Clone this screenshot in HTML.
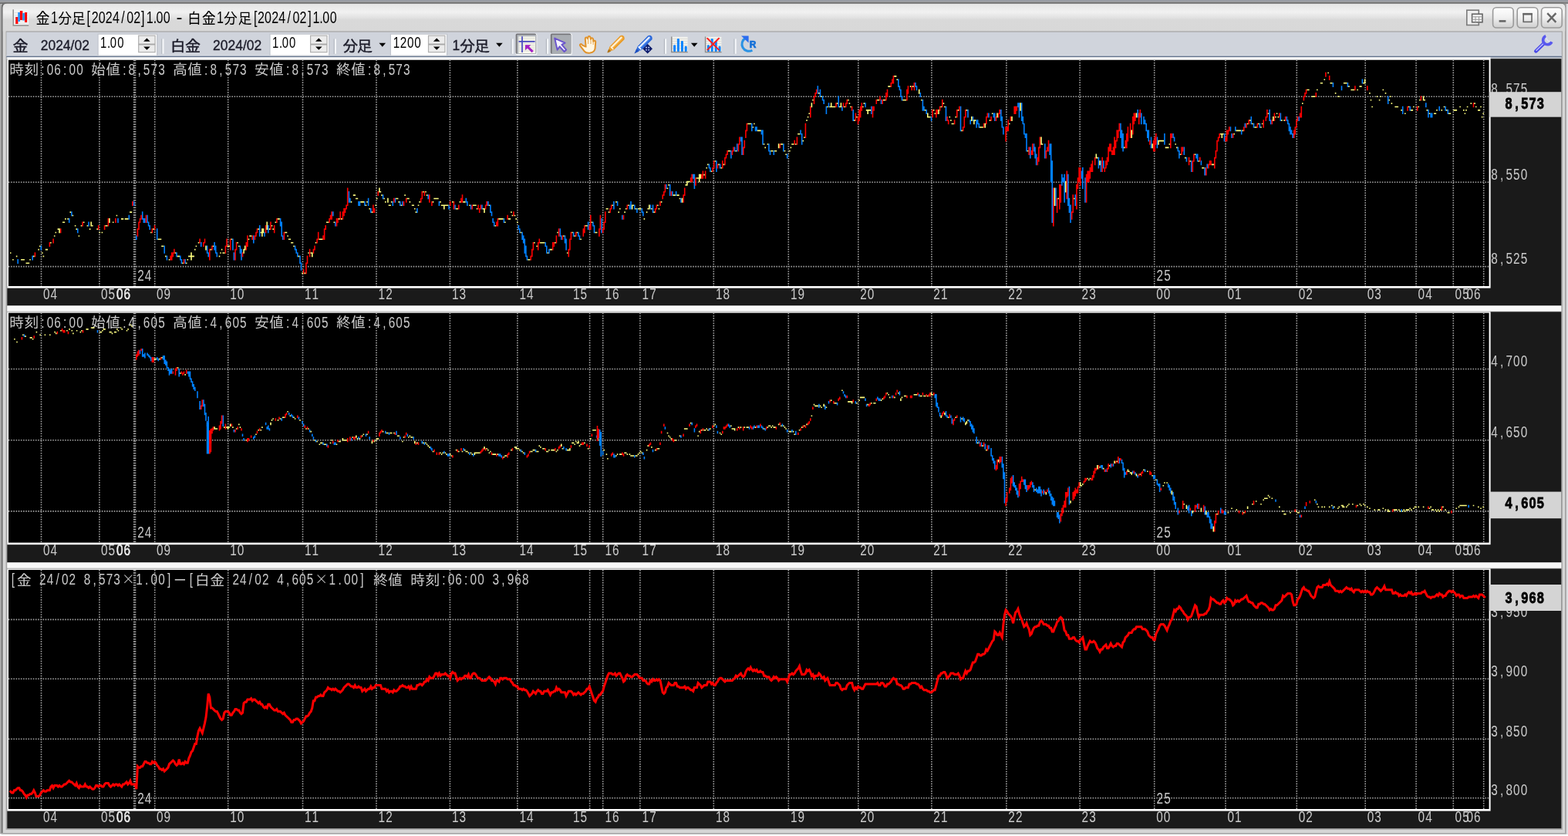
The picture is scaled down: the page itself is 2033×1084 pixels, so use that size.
<!DOCTYPE html>
<html lang="ja"><head><meta charset="utf-8"><title>金1分足[2024/02]1.00 - 白金1分足[2024/02]1.00</title>
<style>
html,body{margin:0;padding:0;background:#fff;overflow:hidden}
body{width:2033px;height:1084px;font-family:"Liberation Sans","IPAGothic",sans-serif}
svg{display:block;position:absolute;left:0;top:0}
text{white-space:pre}
</style></head><body>
<svg width="2033" height="1084" viewBox="0 0 2033 1084">
<defs>
<linearGradient id="gt" x1="0" y1="0" x2="0" y2="1"><stop offset="0" stop-color="#e4e4e4"/><stop offset="0.30" stop-color="#f1f1f1"/><stop offset="0.50" stop-color="#e2e2e2"/><stop offset="0.58" stop-color="#d9d9d9"/><stop offset="1" stop-color="#d8d8d8"/></linearGradient>
<linearGradient id="gtop" x1="0" y1="0" x2="0" y2="1"><stop offset="0" stop-color="#9297a2"/><stop offset="0.45" stop-color="#a2a3a6"/><stop offset="0.75" stop-color="#747474"/><stop offset="1" stop-color="#6e6e6e"/></linearGradient>
<linearGradient id="gbtn" x1="0" y1="0" x2="0" y2="1"><stop offset="0" stop-color="#ffffff"/><stop offset="0.5" stop-color="#f0f0f0"/><stop offset="1" stop-color="#cfcfcf"/></linearGradient>
<filter id="soft" filterUnits="userSpaceOnUse" x="0" y="0" width="2033" height="1084" color-interpolation-filters="sRGB"><feGaussianBlur stdDeviation="0.45"/></filter>
</defs>
<g filter="url(#soft)">
<rect x="0" y="0" width="2033" height="1084" fill="#ffffff"/>
<rect x="0" y="0" width="2033" height="1081.6" fill="#e0e0e4"/>
<rect x="0" y="0" width="1.6" height="1081" fill="#ababab"/>
<rect x="0" y="0" width="2033" height="5" fill="url(#gtop)"/>
<path d="M1.6,1081.3V9 Q1.6,3 7.6,3 H2024.6 Q2030.6,3 2030.6,9 V1081.3 Z" fill="#707070"/>
<path d="M2029.3,1081.3V9 Q2029.3,4.6 2024.6,4.6 H2033 V1081.3Z" fill="#a0a0a0"/>
<rect x="2030.8" y="5" width="2.2" height="1076.6" fill="#dedee2"/>
<path d="M3.6,1080V10 Q3.6,4.8 9,4.8 H2024 Q2029.3,4.8 2029.3,10 V1080 Z" fill="#d6d6d6"/>
<rect x="1.6" y="1080" width="2029" height="1.4" fill="#a8a8a8"/>
<path d="M3.8,40.6V10 Q3.8,5 9,5 H2024 Q2029.2,5 2029.2,10 V40.6 Z" fill="url(#gt)"/>
<rect x="7.6" y="40.4" width="2018.3" height="1035.4" fill="#a4a4a4"/>
<rect x="8.4" y="41.6" width="2016.4" height="31.4" fill="#d0d4dc"/>
<rect x="8.4" y="71.5" width="2016.4" height="1.4" fill="#dde1e8"/>
<rect x="8.4" y="72.6" width="2016.4" height="2.0" fill="#66768f"/>
<rect x="8.4" y="74.3" width="2016.4" height="2" fill="#c4c8d0"/>
<rect x="9.3" y="76.2" width="2015" height="998" fill="#c8c8c8"/>
<rect x="9.3" y="397.0" width="2015" height="6.4" fill="#f9f9f9"/>
<rect x="9.3" y="730.0" width="2015" height="6.4" fill="#f9f9f9"/>
<g><rect x="16.5" y="12.3" width="20.6" height="21.2" fill="#f4f4f4"/><path d="M17.2,12.3V33H37.2" stroke="#8a8a8a" stroke-width="1.4" fill="none"/><path d="M19,16.5H36M19,20H36M19,23.5H36M19,27H36M19,30.3H36" stroke="#dcdcdc" stroke-width="0.8"/><path d="M21.8,22V31" stroke="#ff0000" stroke-width="3.2"/><path d="M24.6,16V28" stroke="#1e90ff" stroke-width="2.6"/><path d="M27.6,14V26" stroke="#ff0000" stroke-width="3.4"/><path d="M30.6,17V26.5" stroke="#1e90ff" stroke-width="2.6"/><path d="M33.6,16V29" stroke="#ff0000" stroke-width="3"/></g>
<text transform="translate(0,30.70) scale(0.900,1)" x="51.47" y="0" font-family='"Liberation Sans", "IPAGothic", sans-serif' font-size="20.4" fill="#000">金</text>
<text transform="translate(0,30.20) scale(0.735,1)" x="89.86" y="0" font-family='"Liberation Sans", "IPAGothic", sans-serif' font-size="21.8" fill="#000">1</text>
<text transform="translate(0,30.70) scale(0.900,1)" x="83.24 103.02" y="0" font-family='"Liberation Sans", "IPAGothic", sans-serif' font-size="20.4" fill="#000">分足</text>
<text transform="translate(0,30.20) scale(0.735,1)" x="153.16 161.42 173.80 186.18 198.57 213.98 223.33 235.71 249.08 258.16 270.30 275.44 288.23" y="0" font-family='"Liberation Sans", "IPAGothic", sans-serif' font-size="21.8" fill="#000">[2024/02]1.00</text>
<text transform="translate(0,29.70) scale(1.100,1)" x="207.73" y="0" font-family='"Liberation Sans", "IPAGothic", sans-serif' font-size="21.8" fill="#000">-</text>
<text transform="translate(0,30.70) scale(0.900,1)" x="269.69 290.58" y="0" font-family='"Liberation Sans", "IPAGothic", sans-serif' font-size="20.4" fill="#000">白金</text>
<text transform="translate(0,30.20) scale(0.735,1)" x="382.37" y="0" font-family='"Liberation Sans", "IPAGothic", sans-serif' font-size="21.8" fill="#000">1</text>
<text transform="translate(0,30.70) scale(0.900,1)" x="322.02 342.80" y="0" font-family='"Liberation Sans", "IPAGothic", sans-serif' font-size="20.4" fill="#000">分足</text>
<text transform="translate(0,30.20) scale(0.735,1)" x="447.58 454.35 466.73 479.11 491.49 506.90 516.25 528.63 543.23 551.76 563.64 569.04 581.97" y="0" font-family='"Liberation Sans", "IPAGothic", sans-serif' font-size="21.8" fill="#000">[2024/02]1.00</text>
<g fill="none" stroke="#7a7a7a" stroke-width="1.6"><rect x="1901.8" y="13.2" width="15.5" height="19.3" fill="#efefef"/><rect x="1908.6" y="18.2" width="13.4" height="10.6" fill="#f6f6f6" stroke="#666"/><path d="M1908.6,21.8H1922M1913,21.8V28.8M1917.5,21.8V28.8M1908.6,25.3H1922" stroke="#9a9a9a" stroke-width="1"/></g>
<rect x="1935.6" y="9.8" width="26.6" height="26.2" rx="4.5" fill="url(#gbtn)" stroke="#9a9a9a" stroke-width="1.6"/>
<rect x="1967.2" y="9.8" width="26.6" height="26.2" rx="4.5" fill="url(#gbtn)" stroke="#9a9a9a" stroke-width="1.6"/>
<rect x="1998.6" y="9.8" width="26.6" height="26.2" rx="4.5" fill="url(#gbtn)" stroke="#9a9a9a" stroke-width="1.6"/>
<path d="M1943.6,27.4H1952.4" stroke="#666" stroke-width="2.6"/>
<rect x="1975.2" y="17.8" width="10.8" height="10.6" fill="none" stroke="#666" stroke-width="1.6"/>
<path d="M1974.4,18.2H1986.8" stroke="#666" stroke-width="2.6"/>
<path d="M2006.2,17.2L2017.4,28.8M2017.4,17.2L2006.2,28.8" stroke="#666" stroke-width="2.4" fill="none"/>
<text transform="translate(0,66.50) scale(1.000,1)" x="16.20" y="0" font-family='"Liberation Sans", "IPAGothic", sans-serif' font-size="20.6" fill="#1c1c2a" stroke="#1c1c2a" stroke-width="0.35">金</text>
<text transform="translate(52.70,65.20) scale(0.940,1)" font-family='"Liberation Sans", "IPAGothic", sans-serif' font-size="18.6" fill="#1c1c2a" stroke="#1c1c2a" stroke-width="0.35">2024/02</text>
<rect x="126.5" y="43.6" width="77.99999999999999" height="29.2" fill="#c2c6ce"/>
<rect x="127.7" y="44.8" width="75.39999999999999" height="26.8" fill="#ffffff"/>
<rect x="179.7" y="46.2" width="21.4" height="21.5" fill="#ececec" stroke="#b0b0b0" stroke-width="1.2"/>
<path d="M179.7,57.5H201.1" stroke="#a8a8a8" stroke-width="1.9"/>
<path d="M186.09999999999997,53.8L190.39999999999998,49.4L194.7,53.8Z M186.09999999999997,60.4L190.39999999999998,64.8L194.7,60.4Z" fill="#000"/>
<text transform="translate(0,62.00) scale(0.730,1)" x="178.16 190.45 195.70 208.44" y="0" font-family='"Liberation Sans", "IPAGothic", sans-serif' font-size="20.4" fill="#000">1.00</text>
<rect x="209.2" y="50.4" width="1.3" height="19.4" fill="#b4b8c0"/>
<rect x="210.5" y="50.4" width="2" height="19.4" fill="#f6f8fa"/>
<text transform="translate(0,66.50) scale(1.000,1)" x="220.50 239.70" y="0" font-family='"Liberation Sans", "IPAGothic", sans-serif' font-size="20.6" fill="#1c1c2a" stroke="#1c1c2a" stroke-width="0.35">白金</text>
<text transform="translate(276.00,65.20) scale(0.940,1)" font-family='"Liberation Sans", "IPAGothic", sans-serif' font-size="18.6" fill="#1c1c2a" stroke="#1c1c2a" stroke-width="0.35">2024/02</text>
<rect x="349.40000000000003" y="43.6" width="77.99999999999997" height="29.2" fill="#c2c6ce"/>
<rect x="350.6" y="44.8" width="75.39999999999998" height="26.8" fill="#ffffff"/>
<rect x="402.6" y="46.2" width="21.4" height="21.5" fill="#ececec" stroke="#b0b0b0" stroke-width="1.2"/>
<path d="M402.6,57.5H424.0" stroke="#a8a8a8" stroke-width="1.9"/>
<path d="M409.0,53.8L413.3,49.4L417.6,53.8Z M409.0,60.4L413.3,64.8L417.6,60.4Z" fill="#000"/>
<text transform="translate(0,62.00) scale(0.730,1)" x="483.51 495.79 501.04 513.78" y="0" font-family='"Liberation Sans", "IPAGothic", sans-serif' font-size="20.4" fill="#000">1.00</text>
<rect x="432.59999999999997" y="50.4" width="1.3" height="19.4" fill="#b4b8c0"/>
<rect x="433.9" y="50.4" width="2" height="19.4" fill="#f6f8fa"/>
<text transform="translate(0,66.50) scale(1.000,1)" x="443.90 462.80" y="0" font-family='"Liberation Sans", "IPAGothic", sans-serif' font-size="20.6" fill="#1c1c2a" stroke="#1c1c2a" stroke-width="0.35">分足</text>
<path d="M491.5,55.7H500.1L495.8,60.8Z" fill="#000"/>
<rect x="505.8" y="43.6" width="74.49999999999997" height="29.2" fill="#c2c6ce"/>
<rect x="507.0" y="44.8" width="71.89999999999998" height="26.8" fill="#ffffff"/>
<rect x="555.5" y="46.2" width="21.4" height="21.5" fill="#ececec" stroke="#b0b0b0" stroke-width="1.2"/>
<path d="M555.5,57.5H576.9" stroke="#a8a8a8" stroke-width="1.9"/>
<path d="M561.9000000000001,53.8L566.2,49.4L570.5,53.8Z M561.9000000000001,60.4L566.2,64.8L570.5,60.4Z" fill="#000"/>
<text transform="translate(0,62.00) scale(0.750,1)" x="679.66 691.66 703.93 716.33" y="0" font-family='"Liberation Sans", "IPAGothic", sans-serif' font-size="20.4" fill="#000">1200</text>
<text transform="translate(0,65.20) scale(0.940,1)" x="623.98" y="0" font-family='"Liberation Sans", "IPAGothic", sans-serif' font-size="18.6" fill="#1c1c2a" stroke="#1c1c2a" stroke-width="0.35">1</text>
<text transform="translate(0,66.50) scale(1.000,1)" x="595.70 614.70" y="0" font-family='"Liberation Sans", "IPAGothic", sans-serif' font-size="20.6" fill="#1c1c2a" stroke="#1c1c2a" stroke-width="0.35">分足</text>
<path d="M643.1,55.7H651.6999999999999L647.4,60.8Z" fill="#000"/>
<rect x="662.4000000000001" y="50.4" width="1.3" height="19.4" fill="#b4b8c0"/>
<rect x="663.7" y="50.4" width="2" height="19.4" fill="#f6f8fa"/>
<g><rect x="668.6" y="43.4" width="27.8" height="28" rx="2" fill="#f4f6f8"/><rect x="668.6" y="43.4" width="26.6" height="26.6" rx="2" fill="#747478"/><rect x="670.4" y="45.2" width="24.8" height="24.8" fill="#b4b8be"/><rect x="672.4" y="47.4" width="21.6" height="21.6" fill="#fbfbee"/><path d="M672.6,49.6H693.6M672.6,52H693.6M672.6,56.4H693.6M672.6,58.8H693.6M672.6,61.2H693.6M672.6,63.6H693.6M672.6,66H693.6" stroke="#d4d4d0" stroke-width="0.9"/><path d="M677,47.2V68M672.6,53.8H693.6" stroke="#4848c0" stroke-width="1.7"/><path d="M681,58.2H688.4L686,60.6L691.8,66L689.6,68.2L683.8,62.6L681,65.2Z" fill="#a420c4"/></g>
<rect x="707.8000000000001" y="50.4" width="1.3" height="19.4" fill="#b4b8c0"/>
<rect x="709.1" y="50.4" width="2" height="19.4" fill="#f6f8fa"/>
<g><rect x="713.8" y="43.4" width="28" height="28" rx="2" fill="#f4f6f8"/><rect x="713.8" y="43.4" width="26.6" height="26.6" rx="2" fill="#747478"/><rect x="715.6" y="45.2" width="24.8" height="24.8" fill="#a9adb2"/><path d="M719.2,49.6L732.6,55.6L728.4,57.8L734.2,64.6L731.6,67L725.6,60.4L722.6,64.6Z" fill="#f4f2ff" stroke="#6a54cc" stroke-width="2" stroke-linejoin="round"/></g>
<g><path d="M755.2,58.6 C753,55.8 751.2,57.6 752.4,59.6 L757.8,66.6 C759.4,68.6 762,69 765.2,68.6 C769,68 771.2,66 771.6,62.6 L772.2,54.6 C772.4,52.4 769.8,52 769.4,54 L769,51 C768.8,48.6 766,48.8 766,51 L765.6,49 C765.2,46.2 762.2,46.6 762.4,49.2 L762,50.2 C761.4,47.8 758.6,48.2 758.8,50.6 L759.6,60.6 Z" fill="#fff6e2" stroke="#e0922a" stroke-width="2" stroke-linejoin="round"/><path d="M762.6,50V57M766,51V57M769.2,54V58" stroke="#e8b060" stroke-width="1.1" fill="none"/></g>
<g><path d="M789.6,65.6L791.4,60.6L804.8,47Q807.2,45.8 808.6,48.2L808.8,50.6L795.2,64.2Z" fill="#f4ae3c" stroke="#e89a28" stroke-width="1.8" stroke-linejoin="round"/><path d="M793.6,60.6L805.6,48.6" stroke="#fff0d4" stroke-width="2.2" stroke-linecap="round"/><path d="M791.6,60.4L795.4,64.2" stroke="#fff4e0" stroke-width="1.4"/><path d="M787.8,68L789.4,64.2L791.6,66.4Z" fill="#b07418" stroke="#b07418" stroke-width="1"/></g>
<g><path d="M839.6,56.8L846,63.2L839.6,69.6L833.2,63.2Z" fill="#0c1c6c"/><path d="M837.2,60.8h1.6v1.6h-1.6zM840.4,60.8h1.6v1.6h-1.6zM837.2,64h1.6v1.6h-1.6zM840.4,64h1.6v1.6h-1.6z" fill="#c8d4ff"/><path d="M825.6,65.6L827.4,60.6L840.8,47Q843.2,45.8 844.6,48.2L844.8,50.6L831.2,64.2Z" fill="#3f7ee8" stroke="#2a66d8" stroke-width="1.8" stroke-linejoin="round"/><path d="M829.8,60.4L841.6,48.6" stroke="#e4eeff" stroke-width="2.2" stroke-linecap="round"/><path d="M827.6,60.4L831.4,64.2" stroke="#ffffff" stroke-width="1.6"/><path d="M823.6,68.2L825.4,64.2L827.6,66.4Z" fill="#1c50c0" stroke="#1c50c0" stroke-width="1.2"/></g>
<rect x="860.8000000000001" y="50.4" width="1.3" height="19.4" fill="#b4b8c0"/>
<rect x="862.1" y="50.4" width="2" height="19.4" fill="#f6f8fa"/>
<rect x="871.0" y="47.8" width="20.6" height="19.6" fill="#f2f2ee"/>
<path d="M871.0,50.4H891.6M871.0,53.4H891.6M871.0,56.4H891.6M871.0,59.4H891.6M871.0,62.4H891.6" stroke="#d8d8d4" stroke-width="0.9"/>
<path d="M870.8,47.4V67.6H891.8" stroke="#8c8c8c" stroke-width="1.5" fill="none"/>
<rect x="873.1" y="58.2" width="3" height="8.799999999999997" rx="1.2" fill="#0a84ff"/>
<rect x="877.9" y="50" width="3" height="17" rx="1.2" fill="#0a84ff"/>
<rect x="882.9" y="53" width="3" height="14" rx="1.2" fill="#0a84ff"/>
<rect x="887.7" y="59.8" width="3" height="7.200000000000003" rx="1.2" fill="#0a84ff"/>
<path d="M895.9000000000001,55.7H904.5L900.2,60.8Z" fill="#000"/>
<rect x="914.8" y="47.8" width="20.6" height="19.6" fill="#f2f2ee"/>
<path d="M914.8,50.4H935.4M914.8,53.4H935.4M914.8,56.4H935.4M914.8,59.4H935.4M914.8,62.4H935.4" stroke="#d8d8d4" stroke-width="0.9"/>
<path d="M914.5999999999999,47.4V67.6H935.5999999999999" stroke="#8c8c8c" stroke-width="1.5" fill="none"/>
<rect x="916.9" y="58.2" width="3" height="8.799999999999997" rx="1.2" fill="#0a84ff"/>
<rect x="921.6999999999999" y="50" width="3" height="17" rx="1.2" fill="#0a84ff"/>
<rect x="926.6999999999999" y="53" width="3" height="14" rx="1.2" fill="#0a84ff"/>
<rect x="931.5" y="59.8" width="3" height="7.200000000000003" rx="1.2" fill="#0a84ff"/>
<path d="M917.1999999999999,49.8L932.0,64.6M932.0,49.8L917.1999999999999,64.6" stroke="#ff2020" stroke-width="2" stroke-linecap="round"/>
<rect x="951.4000000000001" y="50.4" width="1.3" height="19.4" fill="#b4b8c0"/>
<rect x="952.7" y="50.4" width="2" height="19.4" fill="#f6f8fa"/>
<g><path d="M966.6,49.4 A8.6,8.6 0 1 0 975.4,65.2" fill="none" stroke="#2a92e4" stroke-width="3"/><path d="M961,46.4H970.6V55.6Z" fill="#2a6cf0"/><text transform="translate(971.80,61.60) scale(0.920,1)" font-family='"Liberation Sans", "IPAGothic", sans-serif' font-size="13.0" fill="#1470d8" font-weight="bold" stroke="#1470d8" stroke-width="0.7">R</text></g>
<g><path d="M1991.4,66.4L2001.6,56.4" stroke="#4646e6" stroke-width="4.6" stroke-linecap="round"/><path d="M1992,65.4L2001,56.6" stroke="#b4b4ff" stroke-width="1.5" stroke-linecap="round"/><path d="M2004.2,46.6 A5.8,5.8 0 1 0 2011.8,54.2" fill="none" stroke="#5858ee" stroke-width="3.6"/><path d="M2005.2,48.4 A4.2,4.2 0 0 0 2009.8,53.4" fill="none" stroke="#e0e0ff" stroke-width="1.3"/></g>
<rect x="9.3" y="76.2" width="2015.0" height="319.8" fill="#1a1a1a"/>
<rect x="9.3" y="74.3" width="1923.3" height="299.3" fill="#ffffff"/>
<rect x="11.0" y="77.7" width="1919.6" height="293.3" fill="#000000"/>
<text x="11.98 31.24" y="97.30" font-family='"Liberation Sans", "IPAGothic", sans-serif' font-size="19.3" fill="#cacaca">時刻</text>
<text transform="translate(0,96.70) scale(0.7500,1)" x="70.93 80.92 93.76 109.45 119.44 132.28" y="0" font-family='"Liberation Sans", "IPAGothic", sans-serif' font-size="20.5" fill="#cacaca">:06:00</text>
<text x="117.91 137.17" y="97.30" font-family='"Liberation Sans", "IPAGothic", sans-serif' font-size="19.3" fill="#cacaca">始値</text>
<text transform="translate(0,96.70) scale(0.7500,1)" x="212.17 222.16 237.85 247.84 260.68 273.52" y="0" font-family='"Liberation Sans", "IPAGothic", sans-serif' font-size="20.5" fill="#cacaca">:8,573</text>
<text x="223.84 243.10" y="97.30" font-family='"Liberation Sans", "IPAGothic", sans-serif' font-size="19.3" fill="#cacaca">高値</text>
<text transform="translate(0,96.70) scale(0.7500,1)" x="353.41 363.40 379.09 389.08 401.92 414.76" y="0" font-family='"Liberation Sans", "IPAGothic", sans-serif' font-size="20.5" fill="#cacaca">:8,573</text>
<text x="329.77 349.03" y="97.30" font-family='"Liberation Sans", "IPAGothic", sans-serif' font-size="19.3" fill="#cacaca">安値</text>
<text transform="translate(0,96.70) scale(0.7500,1)" x="494.65 504.64 520.33 530.32 543.16 556.00" y="0" font-family='"Liberation Sans", "IPAGothic", sans-serif' font-size="20.5" fill="#cacaca">:8,573</text>
<text x="435.70 454.96" y="97.30" font-family='"Liberation Sans", "IPAGothic", sans-serif' font-size="19.3" fill="#cacaca">終値</text>
<text transform="translate(0,96.70) scale(0.7500,1)" x="635.89 645.88 661.57 671.56 684.40 697.24" y="0" font-family='"Liberation Sans", "IPAGothic", sans-serif' font-size="20.5" fill="#cacaca">:8,573</text>
<path d="M53.5,77.7V371.0M128.9,77.7V371.0M200.7,77.7V371.0M295.7,77.7V371.0M392.5,77.7V371.0M488.0,77.7V371.0M583.4,77.7V371.0M670.9,77.7V371.0M764.6,77.7V371.0M781.7,77.7V371.0M829.9,77.7V371.0M925.3,77.7V371.0M1022.3,77.7V371.0M1112.8,77.7V371.0M1207.9,77.7V371.0M1304.9,77.7V371.0M1400.1,77.7V371.0M1496.7,77.7V371.0M1589.0,77.7V371.0M1681.3,77.7V371.0M1770.2,77.7V371.0M1836.1,77.7V371.0M1884.3,77.7V371.0M1923.7,77.7V371.0M11.0,125.3H1930.6M11.0,236.3H1930.6M11.0,345.6H1930.6" stroke="#a0a0a0" stroke-width="1.59" stroke-dasharray="1.59 1.59" fill="none"/>
<path d="M174.6,77.7V371.0" stroke="#a0a0a0" stroke-width="3.50" stroke-dasharray="1.59 1.59" fill="none"/>
<text transform="translate(0,121.70) scale(0.7500,1)" x="2577.52 2593.21 2603.20 2616.04 2628.88" y="0" font-family='"Liberation Sans", "IPAGothic", sans-serif' font-size="20.5" fill="#cacaca">8,575</text>
<text transform="translate(0,232.70) scale(0.7500,1)" x="2577.52 2593.21 2603.20 2616.04 2628.88" y="0" font-family='"Liberation Sans", "IPAGothic", sans-serif' font-size="20.5" fill="#cacaca">8,550</text>
<text transform="translate(0,342.00) scale(0.7500,1)" x="2577.52 2593.21 2603.20 2616.04 2628.88" y="0" font-family='"Liberation Sans", "IPAGothic", sans-serif' font-size="20.5" fill="#cacaca">8,525</text>
<text transform="translate(0,364.00) scale(0.7500,1)" x="237.52 250.36" y="0" font-family='"Liberation Sans", "IPAGothic", sans-serif' font-size="20.5" fill="#cacaca">24</text>
<text transform="translate(0,364.00) scale(0.7500,1)" x="1999.39 2012.23" y="0" font-family='"Liberation Sans", "IPAGothic", sans-serif' font-size="20.5" fill="#cacaca">25</text>
<text transform="translate(0,387.70) scale(0.7500,1)" x="74.59 87.43" y="0" font-family='"Liberation Sans", "IPAGothic", sans-serif' font-size="20.5" fill="#cacaca">04</text>
<text transform="translate(0,387.70) scale(0.7500,1)" x="174.59 187.43" y="0" font-family='"Liberation Sans", "IPAGothic", sans-serif' font-size="20.5" fill="#cacaca">05</text>
<text transform="translate(0,387.70) scale(0.7500,1)" x="270.59 283.43" y="0" font-family='"Liberation Sans", "IPAGothic", sans-serif' font-size="20.5" fill="#cacaca">09</text>
<text transform="translate(0,387.70) scale(0.7500,1)" x="397.65 410.49" y="0" font-family='"Liberation Sans", "IPAGothic", sans-serif' font-size="20.5" fill="#cacaca">10</text>
<text transform="translate(0,387.70) scale(0.7500,1)" x="526.59 539.43" y="0" font-family='"Liberation Sans", "IPAGothic", sans-serif' font-size="20.5" fill="#cacaca">11</text>
<text transform="translate(0,387.70) scale(0.7500,1)" x="654.05 666.89" y="0" font-family='"Liberation Sans", "IPAGothic", sans-serif' font-size="20.5" fill="#cacaca">12</text>
<text transform="translate(0,387.70) scale(0.7500,1)" x="781.25 794.09" y="0" font-family='"Liberation Sans", "IPAGothic", sans-serif' font-size="20.5" fill="#cacaca">13</text>
<text transform="translate(0,387.70) scale(0.7500,1)" x="897.92 910.76" y="0" font-family='"Liberation Sans", "IPAGothic", sans-serif' font-size="20.5" fill="#cacaca">14</text>
<text transform="translate(0,387.70) scale(0.7500,1)" x="990.59 1003.43" y="0" font-family='"Liberation Sans", "IPAGothic", sans-serif' font-size="20.5" fill="#cacaca">15</text>
<text transform="translate(0,387.70) scale(0.7500,1)" x="1045.92 1058.76" y="0" font-family='"Liberation Sans", "IPAGothic", sans-serif' font-size="20.5" fill="#cacaca">16</text>
<text transform="translate(0,387.70) scale(0.7500,1)" x="1110.05 1122.89" y="0" font-family='"Liberation Sans", "IPAGothic", sans-serif' font-size="20.5" fill="#cacaca">17</text>
<text transform="translate(0,387.70) scale(0.7500,1)" x="1237.25 1250.09" y="0" font-family='"Liberation Sans", "IPAGothic", sans-serif' font-size="20.5" fill="#cacaca">18</text>
<text transform="translate(0,387.70) scale(0.7500,1)" x="1366.59 1379.43" y="0" font-family='"Liberation Sans", "IPAGothic", sans-serif' font-size="20.5" fill="#cacaca">19</text>
<text transform="translate(0,387.70) scale(0.7500,1)" x="1486.99 1499.83" y="0" font-family='"Liberation Sans", "IPAGothic", sans-serif' font-size="20.5" fill="#cacaca">20</text>
<text transform="translate(0,387.70) scale(0.7500,1)" x="1613.79 1626.63" y="0" font-family='"Liberation Sans", "IPAGothic", sans-serif' font-size="20.5" fill="#cacaca">21</text>
<text transform="translate(0,387.70) scale(0.7500,1)" x="1743.12 1755.96" y="0" font-family='"Liberation Sans", "IPAGothic", sans-serif' font-size="20.5" fill="#cacaca">22</text>
<text transform="translate(0,387.70) scale(0.7500,1)" x="1870.05 1882.89" y="0" font-family='"Liberation Sans", "IPAGothic", sans-serif' font-size="20.5" fill="#cacaca">23</text>
<text transform="translate(0,387.70) scale(0.7500,1)" x="1998.85 2011.69" y="0" font-family='"Liberation Sans", "IPAGothic", sans-serif' font-size="20.5" fill="#cacaca">00</text>
<text transform="translate(0,387.70) scale(0.7500,1)" x="2121.92 2134.76" y="0" font-family='"Liberation Sans", "IPAGothic", sans-serif' font-size="20.5" fill="#cacaca">01</text>
<text transform="translate(0,387.70) scale(0.7500,1)" x="2244.99 2257.83" y="0" font-family='"Liberation Sans", "IPAGothic", sans-serif' font-size="20.5" fill="#cacaca">02</text>
<text transform="translate(0,387.70) scale(0.7500,1)" x="2363.52 2376.36" y="0" font-family='"Liberation Sans", "IPAGothic", sans-serif' font-size="20.5" fill="#cacaca">03</text>
<text transform="translate(0,387.70) scale(0.7500,1)" x="2451.39 2464.23" y="0" font-family='"Liberation Sans", "IPAGothic", sans-serif' font-size="20.5" fill="#cacaca">04</text>
<text transform="translate(0,387.70) scale(0.7500,1)" x="2515.39 2528.23" y="0" font-family='"Liberation Sans", "IPAGothic", sans-serif' font-size="20.5" fill="#cacaca">05</text>
<text transform="translate(0,387.70) scale(0.7500,1)" x="2535.25 2548.09" y="0" font-family='"Liberation Sans", "IPAGothic", sans-serif' font-size="20.5" fill="#cacaca">06</text>
<text transform="translate(0,387.70) scale(0.7500,1)" x="201.25 214.09" y="0" font-family='"Liberation Sans", "IPAGothic", sans-serif' font-size="20.5" fill="#eeeeee" stroke="#eeeeee" stroke-width="0.6">06</text>
<rect x="9.3" y="404.3" width="2015.0" height="324.7" fill="#1a1a1a"/>
<rect x="9.3" y="404.3" width="1923.3" height="301.90000000000003" fill="#ffffff"/>
<rect x="11.0" y="405.7" width="1919.6" height="297.90000000000003" fill="#000000"/>
<text x="11.98 31.24" y="425.30" font-family='"Liberation Sans", "IPAGothic", sans-serif' font-size="19.3" fill="#cacaca">時刻</text>
<text transform="translate(0,424.70) scale(0.7500,1)" x="70.93 80.92 93.76 109.45 119.44 132.28" y="0" font-family='"Liberation Sans", "IPAGothic", sans-serif' font-size="20.5" fill="#cacaca">:06:00</text>
<text x="117.91 137.17" y="425.30" font-family='"Liberation Sans", "IPAGothic", sans-serif' font-size="19.3" fill="#cacaca">始値</text>
<text transform="translate(0,424.70) scale(0.7500,1)" x="212.17 222.16 237.85 247.84 260.68 273.52" y="0" font-family='"Liberation Sans", "IPAGothic", sans-serif' font-size="20.5" fill="#cacaca">:4,605</text>
<text x="223.84 243.10" y="425.30" font-family='"Liberation Sans", "IPAGothic", sans-serif' font-size="19.3" fill="#cacaca">高値</text>
<text transform="translate(0,424.70) scale(0.7500,1)" x="353.41 363.40 379.09 389.08 401.92 414.76" y="0" font-family='"Liberation Sans", "IPAGothic", sans-serif' font-size="20.5" fill="#cacaca">:4,605</text>
<text x="329.77 349.03" y="425.30" font-family='"Liberation Sans", "IPAGothic", sans-serif' font-size="19.3" fill="#cacaca">安値</text>
<text transform="translate(0,424.70) scale(0.7500,1)" x="494.65 504.64 520.33 530.32 543.16 556.00" y="0" font-family='"Liberation Sans", "IPAGothic", sans-serif' font-size="20.5" fill="#cacaca">:4,605</text>
<text x="435.70 454.96" y="425.30" font-family='"Liberation Sans", "IPAGothic", sans-serif' font-size="19.3" fill="#cacaca">終値</text>
<text transform="translate(0,424.70) scale(0.7500,1)" x="635.89 645.88 661.57 671.56 684.40 697.24" y="0" font-family='"Liberation Sans", "IPAGothic", sans-serif' font-size="20.5" fill="#cacaca">:4,605</text>
<path d="M53.5,405.7V703.6M128.9,405.7V703.6M200.7,405.7V703.6M295.7,405.7V703.6M392.5,405.7V703.6M488.0,405.7V703.6M583.4,405.7V703.6M670.9,405.7V703.6M764.6,405.7V703.6M781.7,405.7V703.6M829.9,405.7V703.6M925.3,405.7V703.6M1022.3,405.7V703.6M1112.8,405.7V703.6M1207.9,405.7V703.6M1304.9,405.7V703.6M1400.1,405.7V703.6M1496.7,405.7V703.6M1589.0,405.7V703.6M1681.3,405.7V703.6M1770.2,405.7V703.6M1836.1,405.7V703.6M1884.3,405.7V703.6M1923.7,405.7V703.6M11.0,478.5H1930.6M11.0,570.7H1930.6M11.0,662.9H1930.6" stroke="#a0a0a0" stroke-width="1.59" stroke-dasharray="1.59 1.59" fill="none"/>
<path d="M174.6,405.7V703.6" stroke="#a0a0a0" stroke-width="3.50" stroke-dasharray="1.59 1.59" fill="none"/>
<text transform="translate(0,474.90) scale(0.7500,1)" x="2577.52 2593.21 2603.20 2616.04 2628.88" y="0" font-family='"Liberation Sans", "IPAGothic", sans-serif' font-size="20.5" fill="#cacaca">4,700</text>
<text transform="translate(0,567.10) scale(0.7500,1)" x="2577.52 2593.21 2603.20 2616.04 2628.88" y="0" font-family='"Liberation Sans", "IPAGothic", sans-serif' font-size="20.5" fill="#cacaca">4,650</text>
<text transform="translate(0,659.30) scale(0.7500,1)" x="2577.52 2593.21 2603.20 2616.04 2628.88" y="0" font-family='"Liberation Sans", "IPAGothic", sans-serif' font-size="20.5" fill="#cacaca">4,600</text>
<text transform="translate(0,696.60) scale(0.7500,1)" x="237.52 250.36" y="0" font-family='"Liberation Sans", "IPAGothic", sans-serif' font-size="20.5" fill="#cacaca">24</text>
<text transform="translate(0,696.60) scale(0.7500,1)" x="1999.39 2012.23" y="0" font-family='"Liberation Sans", "IPAGothic", sans-serif' font-size="20.5" fill="#cacaca">25</text>
<text transform="translate(0,720.30) scale(0.7500,1)" x="74.59 87.43" y="0" font-family='"Liberation Sans", "IPAGothic", sans-serif' font-size="20.5" fill="#cacaca">04</text>
<text transform="translate(0,720.30) scale(0.7500,1)" x="174.59 187.43" y="0" font-family='"Liberation Sans", "IPAGothic", sans-serif' font-size="20.5" fill="#cacaca">05</text>
<text transform="translate(0,720.30) scale(0.7500,1)" x="270.59 283.43" y="0" font-family='"Liberation Sans", "IPAGothic", sans-serif' font-size="20.5" fill="#cacaca">09</text>
<text transform="translate(0,720.30) scale(0.7500,1)" x="397.65 410.49" y="0" font-family='"Liberation Sans", "IPAGothic", sans-serif' font-size="20.5" fill="#cacaca">10</text>
<text transform="translate(0,720.30) scale(0.7500,1)" x="526.59 539.43" y="0" font-family='"Liberation Sans", "IPAGothic", sans-serif' font-size="20.5" fill="#cacaca">11</text>
<text transform="translate(0,720.30) scale(0.7500,1)" x="654.05 666.89" y="0" font-family='"Liberation Sans", "IPAGothic", sans-serif' font-size="20.5" fill="#cacaca">12</text>
<text transform="translate(0,720.30) scale(0.7500,1)" x="781.25 794.09" y="0" font-family='"Liberation Sans", "IPAGothic", sans-serif' font-size="20.5" fill="#cacaca">13</text>
<text transform="translate(0,720.30) scale(0.7500,1)" x="897.92 910.76" y="0" font-family='"Liberation Sans", "IPAGothic", sans-serif' font-size="20.5" fill="#cacaca">14</text>
<text transform="translate(0,720.30) scale(0.7500,1)" x="990.59 1003.43" y="0" font-family='"Liberation Sans", "IPAGothic", sans-serif' font-size="20.5" fill="#cacaca">15</text>
<text transform="translate(0,720.30) scale(0.7500,1)" x="1045.92 1058.76" y="0" font-family='"Liberation Sans", "IPAGothic", sans-serif' font-size="20.5" fill="#cacaca">16</text>
<text transform="translate(0,720.30) scale(0.7500,1)" x="1110.05 1122.89" y="0" font-family='"Liberation Sans", "IPAGothic", sans-serif' font-size="20.5" fill="#cacaca">17</text>
<text transform="translate(0,720.30) scale(0.7500,1)" x="1237.25 1250.09" y="0" font-family='"Liberation Sans", "IPAGothic", sans-serif' font-size="20.5" fill="#cacaca">18</text>
<text transform="translate(0,720.30) scale(0.7500,1)" x="1366.59 1379.43" y="0" font-family='"Liberation Sans", "IPAGothic", sans-serif' font-size="20.5" fill="#cacaca">19</text>
<text transform="translate(0,720.30) scale(0.7500,1)" x="1486.99 1499.83" y="0" font-family='"Liberation Sans", "IPAGothic", sans-serif' font-size="20.5" fill="#cacaca">20</text>
<text transform="translate(0,720.30) scale(0.7500,1)" x="1613.79 1626.63" y="0" font-family='"Liberation Sans", "IPAGothic", sans-serif' font-size="20.5" fill="#cacaca">21</text>
<text transform="translate(0,720.30) scale(0.7500,1)" x="1743.12 1755.96" y="0" font-family='"Liberation Sans", "IPAGothic", sans-serif' font-size="20.5" fill="#cacaca">22</text>
<text transform="translate(0,720.30) scale(0.7500,1)" x="1870.05 1882.89" y="0" font-family='"Liberation Sans", "IPAGothic", sans-serif' font-size="20.5" fill="#cacaca">23</text>
<text transform="translate(0,720.30) scale(0.7500,1)" x="1998.85 2011.69" y="0" font-family='"Liberation Sans", "IPAGothic", sans-serif' font-size="20.5" fill="#cacaca">00</text>
<text transform="translate(0,720.30) scale(0.7500,1)" x="2121.92 2134.76" y="0" font-family='"Liberation Sans", "IPAGothic", sans-serif' font-size="20.5" fill="#cacaca">01</text>
<text transform="translate(0,720.30) scale(0.7500,1)" x="2244.99 2257.83" y="0" font-family='"Liberation Sans", "IPAGothic", sans-serif' font-size="20.5" fill="#cacaca">02</text>
<text transform="translate(0,720.30) scale(0.7500,1)" x="2363.52 2376.36" y="0" font-family='"Liberation Sans", "IPAGothic", sans-serif' font-size="20.5" fill="#cacaca">03</text>
<text transform="translate(0,720.30) scale(0.7500,1)" x="2451.39 2464.23" y="0" font-family='"Liberation Sans", "IPAGothic", sans-serif' font-size="20.5" fill="#cacaca">04</text>
<text transform="translate(0,720.30) scale(0.7500,1)" x="2515.39 2528.23" y="0" font-family='"Liberation Sans", "IPAGothic", sans-serif' font-size="20.5" fill="#cacaca">05</text>
<text transform="translate(0,720.30) scale(0.7500,1)" x="2535.25 2548.09" y="0" font-family='"Liberation Sans", "IPAGothic", sans-serif' font-size="20.5" fill="#cacaca">06</text>
<text transform="translate(0,720.30) scale(0.7500,1)" x="201.25 214.09" y="0" font-family='"Liberation Sans", "IPAGothic", sans-serif' font-size="20.5" fill="#eeeeee" stroke="#eeeeee" stroke-width="0.6">06</text>
<rect x="9.3" y="737.4" width="2015.0" height="336.80000000000007" fill="#1a1a1a"/>
<rect x="9.3" y="737.4" width="1923.3" height="314.19999999999993" fill="#ffffff"/>
<rect x="11.0" y="738.9" width="1919.6" height="310.1" fill="#000000"/>
<text transform="translate(0,757.90) scale(0.7500,1)" x="19.57" y="0" font-family='"Liberation Sans", "IPAGothic", sans-serif' font-size="20.5" fill="#cacaca">[</text>
<text x="21.61" y="758.50" font-family='"Liberation Sans", "IPAGothic", sans-serif' font-size="19.3" fill="#cacaca">金</text>
<text transform="translate(0,757.90) scale(0.7500,1)" x="58.09 68.08 80.92 96.61 106.60 119.44 135.13 145.12 160.81 170.80 183.64 196.48" y="0" font-family='"Liberation Sans", "IPAGothic", sans-serif' font-size="20.5" fill="#cacaca"> 24/02 8,573</text>
<text x="158.38" y="759.94" font-family='"Liberation Sans", "IPAGothic", sans-serif' font-size="27.0" fill="#cacaca" stroke="#000" stroke-width="1.0" paint-order="fill stroke">×</text>
<text transform="translate(0,757.90) scale(0.7500,1)" x="235.00 250.69 260.68 273.52 289.21" y="0" font-family='"Liberation Sans", "IPAGothic", sans-serif' font-size="20.5" fill="#cacaca">1.00]</text>
<text x="223.84" y="758.50" font-family='"Liberation Sans", "IPAGothic", sans-serif' font-size="19.3" fill="#cacaca">－</text>
<text transform="translate(0,757.90) scale(0.7500,1)" x="327.73" y="0" font-family='"Liberation Sans", "IPAGothic", sans-serif' font-size="20.5" fill="#cacaca">[</text>
<text x="252.73 271.99" y="758.50" font-family='"Liberation Sans", "IPAGothic", sans-serif' font-size="19.3" fill="#cacaca">白金</text>
<text transform="translate(0,757.90) scale(0.7500,1)" x="391.93 401.92 414.76 430.45 440.44 453.28 468.97 478.96 494.65 504.64 517.48 530.32" y="0" font-family='"Liberation Sans", "IPAGothic", sans-serif' font-size="20.5" fill="#cacaca"> 24/02 4,605</text>
<text x="408.76" y="759.94" font-family='"Liberation Sans", "IPAGothic", sans-serif' font-size="27.0" fill="#cacaca" stroke="#000" stroke-width="1.0" paint-order="fill stroke">×</text>
<text transform="translate(0,757.90) scale(0.7500,1)" x="568.84 584.53 594.52 607.36 623.05" y="0" font-family='"Liberation Sans", "IPAGothic", sans-serif' font-size="20.5" fill="#cacaca">1.00]</text>
<text x="483.85 503.11" y="758.50" font-family='"Liberation Sans", "IPAGothic", sans-serif' font-size="19.3" fill="#cacaca">終値</text>
<text x="532.00 551.26" y="758.50" font-family='"Liberation Sans", "IPAGothic", sans-serif' font-size="19.3" fill="#cacaca">時刻</text>
<text transform="translate(0,757.90) scale(0.7500,1)" x="764.29 774.28 787.12 802.81 812.80 825.64 841.33 851.32 867.01 877.00 889.84 902.68" y="0" font-family='"Liberation Sans", "IPAGothic", sans-serif' font-size="20.5" fill="#cacaca">:06:00 3,968</text>
<path d="M53.5,738.9V1049.0M128.9,738.9V1049.0M200.7,738.9V1049.0M295.7,738.9V1049.0M392.5,738.9V1049.0M488.0,738.9V1049.0M583.4,738.9V1049.0M670.9,738.9V1049.0M764.6,738.9V1049.0M781.7,738.9V1049.0M829.9,738.9V1049.0M925.3,738.9V1049.0M1022.3,738.9V1049.0M1112.8,738.9V1049.0M1207.9,738.9V1049.0M1304.9,738.9V1049.0M1400.1,738.9V1049.0M1496.7,738.9V1049.0M1589.0,738.9V1049.0M1681.3,738.9V1049.0M1770.2,738.9V1049.0M1836.1,738.9V1049.0M1884.3,738.9V1049.0M1923.7,738.9V1049.0M11.0,803.4H1930.6M11.0,880.2H1930.6M11.0,958.2H1930.6M11.0,1034.8H1930.6" stroke="#a0a0a0" stroke-width="1.59" stroke-dasharray="1.59 1.59" fill="none"/>
<path d="M174.6,738.9V1049.0" stroke="#a0a0a0" stroke-width="3.50" stroke-dasharray="1.59 1.59" fill="none"/>
<text transform="translate(0,799.80) scale(0.7500,1)" x="2577.52 2593.21 2603.20 2616.04 2628.88" y="0" font-family='"Liberation Sans", "IPAGothic", sans-serif' font-size="20.5" fill="#cacaca">3,950</text>
<text transform="translate(0,876.60) scale(0.7500,1)" x="2577.52 2593.21 2603.20 2616.04 2628.88" y="0" font-family='"Liberation Sans", "IPAGothic", sans-serif' font-size="20.5" fill="#cacaca">3,900</text>
<text transform="translate(0,954.60) scale(0.7500,1)" x="2577.52 2593.21 2603.20 2616.04 2628.88" y="0" font-family='"Liberation Sans", "IPAGothic", sans-serif' font-size="20.5" fill="#cacaca">3,850</text>
<text transform="translate(0,1031.20) scale(0.7500,1)" x="2577.52 2593.21 2603.20 2616.04 2628.88" y="0" font-family='"Liberation Sans", "IPAGothic", sans-serif' font-size="20.5" fill="#cacaca">3,800</text>
<text transform="translate(0,1042.00) scale(0.7500,1)" x="237.52 250.36" y="0" font-family='"Liberation Sans", "IPAGothic", sans-serif' font-size="20.5" fill="#cacaca">24</text>
<text transform="translate(0,1042.00) scale(0.7500,1)" x="1999.39 2012.23" y="0" font-family='"Liberation Sans", "IPAGothic", sans-serif' font-size="20.5" fill="#cacaca">25</text>
<text transform="translate(0,1065.70) scale(0.7500,1)" x="74.59 87.43" y="0" font-family='"Liberation Sans", "IPAGothic", sans-serif' font-size="20.5" fill="#cacaca">04</text>
<text transform="translate(0,1065.70) scale(0.7500,1)" x="174.59 187.43" y="0" font-family='"Liberation Sans", "IPAGothic", sans-serif' font-size="20.5" fill="#cacaca">05</text>
<text transform="translate(0,1065.70) scale(0.7500,1)" x="270.59 283.43" y="0" font-family='"Liberation Sans", "IPAGothic", sans-serif' font-size="20.5" fill="#cacaca">09</text>
<text transform="translate(0,1065.70) scale(0.7500,1)" x="397.65 410.49" y="0" font-family='"Liberation Sans", "IPAGothic", sans-serif' font-size="20.5" fill="#cacaca">10</text>
<text transform="translate(0,1065.70) scale(0.7500,1)" x="526.59 539.43" y="0" font-family='"Liberation Sans", "IPAGothic", sans-serif' font-size="20.5" fill="#cacaca">11</text>
<text transform="translate(0,1065.70) scale(0.7500,1)" x="654.05 666.89" y="0" font-family='"Liberation Sans", "IPAGothic", sans-serif' font-size="20.5" fill="#cacaca">12</text>
<text transform="translate(0,1065.70) scale(0.7500,1)" x="781.25 794.09" y="0" font-family='"Liberation Sans", "IPAGothic", sans-serif' font-size="20.5" fill="#cacaca">13</text>
<text transform="translate(0,1065.70) scale(0.7500,1)" x="897.92 910.76" y="0" font-family='"Liberation Sans", "IPAGothic", sans-serif' font-size="20.5" fill="#cacaca">14</text>
<text transform="translate(0,1065.70) scale(0.7500,1)" x="990.59 1003.43" y="0" font-family='"Liberation Sans", "IPAGothic", sans-serif' font-size="20.5" fill="#cacaca">15</text>
<text transform="translate(0,1065.70) scale(0.7500,1)" x="1045.92 1058.76" y="0" font-family='"Liberation Sans", "IPAGothic", sans-serif' font-size="20.5" fill="#cacaca">16</text>
<text transform="translate(0,1065.70) scale(0.7500,1)" x="1110.05 1122.89" y="0" font-family='"Liberation Sans", "IPAGothic", sans-serif' font-size="20.5" fill="#cacaca">17</text>
<text transform="translate(0,1065.70) scale(0.7500,1)" x="1237.25 1250.09" y="0" font-family='"Liberation Sans", "IPAGothic", sans-serif' font-size="20.5" fill="#cacaca">18</text>
<text transform="translate(0,1065.70) scale(0.7500,1)" x="1366.59 1379.43" y="0" font-family='"Liberation Sans", "IPAGothic", sans-serif' font-size="20.5" fill="#cacaca">19</text>
<text transform="translate(0,1065.70) scale(0.7500,1)" x="1486.99 1499.83" y="0" font-family='"Liberation Sans", "IPAGothic", sans-serif' font-size="20.5" fill="#cacaca">20</text>
<text transform="translate(0,1065.70) scale(0.7500,1)" x="1613.79 1626.63" y="0" font-family='"Liberation Sans", "IPAGothic", sans-serif' font-size="20.5" fill="#cacaca">21</text>
<text transform="translate(0,1065.70) scale(0.7500,1)" x="1743.12 1755.96" y="0" font-family='"Liberation Sans", "IPAGothic", sans-serif' font-size="20.5" fill="#cacaca">22</text>
<text transform="translate(0,1065.70) scale(0.7500,1)" x="1870.05 1882.89" y="0" font-family='"Liberation Sans", "IPAGothic", sans-serif' font-size="20.5" fill="#cacaca">23</text>
<text transform="translate(0,1065.70) scale(0.7500,1)" x="1998.85 2011.69" y="0" font-family='"Liberation Sans", "IPAGothic", sans-serif' font-size="20.5" fill="#cacaca">00</text>
<text transform="translate(0,1065.70) scale(0.7500,1)" x="2121.92 2134.76" y="0" font-family='"Liberation Sans", "IPAGothic", sans-serif' font-size="20.5" fill="#cacaca">01</text>
<text transform="translate(0,1065.70) scale(0.7500,1)" x="2244.99 2257.83" y="0" font-family='"Liberation Sans", "IPAGothic", sans-serif' font-size="20.5" fill="#cacaca">02</text>
<text transform="translate(0,1065.70) scale(0.7500,1)" x="2363.52 2376.36" y="0" font-family='"Liberation Sans", "IPAGothic", sans-serif' font-size="20.5" fill="#cacaca">03</text>
<text transform="translate(0,1065.70) scale(0.7500,1)" x="2451.39 2464.23" y="0" font-family='"Liberation Sans", "IPAGothic", sans-serif' font-size="20.5" fill="#cacaca">04</text>
<text transform="translate(0,1065.70) scale(0.7500,1)" x="2515.39 2528.23" y="0" font-family='"Liberation Sans", "IPAGothic", sans-serif' font-size="20.5" fill="#cacaca">05</text>
<text transform="translate(0,1065.70) scale(0.7500,1)" x="2535.25 2548.09" y="0" font-family='"Liberation Sans", "IPAGothic", sans-serif' font-size="20.5" fill="#cacaca">06</text>
<text transform="translate(0,1065.70) scale(0.7500,1)" x="201.25 214.09" y="0" font-family='"Liberation Sans", "IPAGothic", sans-serif' font-size="20.5" fill="#eeeeee" stroke="#eeeeee" stroke-width="0.6">06</text>
<path d="M23.2,336.0V342.0M42.2,331.6V337.6M53.3,318.4V324.4M89.7,283.1V289.1M92.9,274.3V280.3M100.8,296.3V302.3M115.0,287.5V293.5M153.0,283.1V289.1M167.3,278.7V284.7M173.6,261.1V267.1M176.8,305.2V311.1M184.7,274.3V284.7M186.3,283.1V289.1M187.9,283.1V289.1M191.0,278.7V289.1M192.6,287.5V293.5M194.2,291.9V297.9M203.7,296.3V311.1M213.2,318.4V328.8M216.4,331.6V337.6M229.0,327.2V333.2M233.8,331.6V337.6M235.4,336.0V342.0M240.1,336.0V342.0M260.7,314.0V320.0M268.6,318.4V328.8M270.2,327.2V333.2M278.1,314.0V324.4M279.7,318.4V328.8M281.3,327.2V333.2M301.9,309.6V324.4M303.5,327.2V337.6M311.4,318.4V328.8M313.0,322.8V337.6M328.8,305.2V315.6M336.7,291.9V306.7M343.0,300.7V306.7M347.8,291.9V302.3M363.6,283.1V293.5M365.2,287.5V306.7M366.8,305.2V311.1M382.6,318.4V324.4M384.2,322.8V328.8M385.8,327.2V333.2M389.0,331.6V342.0M390.5,340.4V350.8M431.7,274.3V280.3M434.9,287.5V293.5M452.3,247.9V262.7M453.9,256.7V262.7M465.0,261.1V267.1M466.5,261.1V267.1M472.9,261.1V267.1M477.6,256.7V267.1M480.8,269.9V275.9M496.6,252.3V258.3M509.3,261.1V267.1M512.4,256.7V262.7M518.8,261.1V267.1M521.9,261.1V267.1M540.9,269.9V275.9M555.2,252.3V258.3M569.4,261.1V267.1M582.1,265.5V271.5M590.0,265.5V271.5M604.3,256.7V262.7M605.9,261.1V267.1M610.6,265.5V271.5M624.9,265.5V271.5M632.8,261.1V267.1M635.9,265.5V275.9M637.5,274.3V280.3M639.1,283.1V289.1M640.7,287.5V293.5M653.4,283.1V289.1M672.4,291.9V297.9M673.9,296.3V302.3M677.1,300.7V311.1M678.7,305.2V315.6M680.3,309.6V328.8M681.9,318.4V333.2M683.4,331.6V337.6M707.2,314.0V320.0M708.8,318.4V328.8M711.9,322.8V328.8M726.2,296.3V306.7M727.8,305.2V311.1M732.5,305.2V315.6M734.1,309.6V324.4M743.6,300.7V306.7M749.9,300.7V306.7M751.5,305.2V311.1M762.6,287.5V297.9M768.9,287.5V293.5M770.5,291.9V302.3M780.0,283.1V302.3M795.9,261.1V271.5M800.6,261.1V267.1M806.9,278.7V284.7M816.4,265.5V271.5M818.0,261.1V271.5M822.8,265.5V271.5M825.9,269.9V275.9M832.3,269.9V275.9M833.9,274.3V280.3M843.4,265.5V271.5M846.5,265.5V275.9M863.9,239.1V245.1M868.7,239.1V253.9M871.9,247.9V253.9M876.6,247.9V253.9M882.9,256.7V262.7M898.8,225.8V231.8M900.4,225.8V245.1M919.4,212.6V218.6M920.9,217.0V223.0M928.9,208.2V223.0M933.6,212.6V218.6M947.9,195.0V205.4M952.6,190.6V196.6M955.8,186.2V196.6M960.5,177.4V183.4M962.1,177.4V201.0M974.8,159.8V170.2M979.5,164.2V170.2M981.1,164.2V170.2M987.4,168.6V174.6M989.0,168.6V187.8M996.9,186.2V196.6M998.5,195.0V201.0M1003.3,195.0V201.0M1015.9,186.2V196.6M1020.7,199.4V205.4M1038.1,168.6V174.6M1039.7,173.0V187.8M1060.3,111.3V121.7M1063.4,115.7V126.1M1066.6,124.5V130.5M1068.2,128.9V134.9M1071.4,137.7V148.1M1074.5,133.3V139.3M1087.2,124.5V139.3M1091.9,137.7V143.7M1106.2,142.1V156.9M1122.0,133.3V139.3M1129.9,137.7V148.1M1142.6,128.9V134.9M1164.8,102.5V112.9M1166.4,111.3V117.3M1167.9,115.7V126.1M1169.5,124.5V130.5M1186.9,106.9V112.9M1188.5,111.3V117.3M1193.3,120.1V126.1M1196.4,128.9V143.7M1198.0,137.7V143.7M1201.2,142.1V148.1M1207.5,150.9V156.9M1226.5,137.7V156.9M1245.5,137.7V170.2M1255.0,142.1V152.5M1258.2,155.3V161.3M1261.4,150.9V156.9M1266.1,155.3V165.7M1267.7,155.3V161.3M1269.3,159.8V165.7M1281.9,146.5V152.5M1288.3,146.5V152.5M1289.8,146.5V156.9M1297.8,142.1V156.9M1299.3,150.9V165.7M1300.9,164.2V174.6M1319.9,133.3V139.3M1321.5,133.3V152.5M1324.7,133.3V156.9M1326.3,150.9V161.3M1327.8,159.8V174.6M1329.4,173.0V179.0M1331.0,173.0V196.6M1335.8,190.6V205.4M1340.5,186.2V196.6M1342.1,190.6V205.4M1343.7,199.4V214.2M1354.8,186.2V205.4M1361.1,186.2V201.0M1362.7,186.2V236.2M1364.3,208.2V289.1M1369.0,243.5V267.1M1376.9,225.8V240.7M1378.5,230.2V236.2M1380.1,225.8V262.7M1384.8,225.8V267.1M1386.4,256.7V275.9M1388.0,265.5V289.1M1394.3,252.3V267.1M1402.3,221.4V231.8M1403.8,217.0V245.1M1407.0,230.2V262.7M1424.4,203.8V218.6M1427.6,208.2V223.0M1430.8,208.2V218.6M1452.9,159.8V179.0M1454.5,168.6V192.2M1456.1,173.0V196.6M1475.1,142.1V152.5M1479.8,146.5V161.3M1483.0,150.9V161.3M1484.6,155.3V161.3M1486.2,159.8V170.2M1487.8,168.6V179.0M1489.3,168.6V183.4M1492.5,177.4V192.2M1500.4,177.4V192.2M1509.9,173.0V187.8M1521.0,173.0V179.0M1522.6,177.4V183.4M1527.3,190.6V196.6M1528.9,195.0V205.4M1535.3,190.6V201.0M1538.4,203.8V209.8M1544.8,208.2V223.0M1551.1,199.4V205.4M1552.7,199.4V209.8M1557.4,208.2V214.2M1562.2,217.0V227.4M1565.3,212.6V218.6M1587.5,173.0V183.4M1595.4,164.2V170.2M1597.0,173.0V179.0M1601.8,164.2V170.2M1609.7,168.6V174.6M1614.4,159.8V165.7M1622.3,150.9V161.3M1625.5,159.8V165.7M1633.4,159.8V165.7M1646.1,142.1V156.9M1647.7,155.3V161.3M1660.3,146.5V156.9M1668.3,150.9V156.9M1669.8,155.3V161.3M1671.4,159.8V170.2M1673.0,164.2V174.6M1674.6,168.6V174.6M1676.2,173.0V179.0M1684.1,150.9V156.9M1728.4,106.9V112.9M1739.5,111.3V117.3M1747.4,106.9V112.9M1766.4,102.5V108.5M1799.7,124.5V134.9M1818.7,137.7V148.1M1828.2,137.7V143.7M1848.8,133.3V139.3M1851.9,142.1V152.5M1855.1,146.5V152.5M1856.7,146.5V152.5M1866.2,137.7V143.7M1874.1,137.7V143.7M1877.3,142.1V148.1" stroke="#0080ff" stroke-width="1.59" fill="none"/>
<path d="M45.4,327.2V333.2M64.4,314.0V320.0M69.1,309.6V315.6M78.6,296.3V302.3M107.1,287.5V293.5M127.7,291.9V297.9M135.6,291.9V297.9M140.4,283.1V293.5M149.9,283.1V289.1M172.0,261.1V267.1M178.4,296.3V306.7M180.0,287.5V297.9M181.5,283.1V289.1M183.1,278.7V284.7M189.5,278.7V289.1M197.4,296.3V302.3M200.5,291.9V297.9M221.1,331.6V337.6M222.7,327.2V337.6M224.3,327.2V333.2M225.9,322.8V328.8M238.5,336.0V342.0M259.1,309.6V315.6M263.9,314.0V320.0M265.5,309.6V315.6M271.8,322.8V337.6M275.0,318.4V324.4M292.4,318.4V328.8M294.0,309.6V320.0M298.7,309.6V324.4M305.0,322.8V337.6M306.6,314.0V324.4M314.5,327.2V333.2M319.3,314.0V324.4M320.9,305.2V320.0M327.2,305.2V311.1M330.4,305.2V311.1M332.0,300.7V306.7M333.5,296.3V302.3M344.6,291.9V302.3M351.0,287.5V297.9M355.7,291.9V302.3M358.9,283.1V289.1M368.4,300.7V311.1M393.7,349.2V355.2M396.9,340.4V355.2M398.5,331.6V342.0M401.6,322.8V333.2M406.4,322.8V328.8M408.0,318.4V324.4M411.1,309.6V315.6M412.7,300.7V311.1M419.0,305.2V311.1M420.6,296.3V311.1M422.2,291.9V297.9M427.0,283.1V289.1M428.5,278.7V284.7M430.1,274.3V284.7M436.5,283.1V293.5M438.0,283.1V289.1M441.2,274.3V284.7M444.4,274.3V284.7M446.0,269.9V280.3M447.5,269.9V275.9M449.1,265.5V271.5M450.7,243.5V267.1M483.9,265.5V275.9M485.5,269.9V275.9M490.3,247.9V253.9M510.9,256.7V262.7M523.5,261.1V267.1M526.7,256.7V262.7M545.7,256.7V262.7M547.3,247.9V258.3M550.4,247.9V253.9M556.8,252.3V262.7M559.9,261.1V267.1M583.7,261.1V267.1M588.4,261.1V271.5M594.8,265.5V271.5M597.9,256.7V262.7M599.5,252.3V262.7M612.2,265.5V271.5M620.1,265.5V271.5M621.7,269.9V275.9M623.3,265.5V271.5M629.6,265.5V271.5M631.2,261.1V267.1M643.9,287.5V293.5M645.4,283.1V293.5M658.1,278.7V284.7M666.0,274.3V280.3M688.2,331.6V337.6M689.8,322.8V333.2M691.4,314.0V324.4M697.7,314.0V324.4M699.3,309.6V315.6M716.7,314.0V324.4M718.3,314.0V320.0M721.4,305.2V315.6M724.6,296.3V306.7M729.4,305.2V311.1M737.3,322.8V333.2M738.9,309.6V324.4M740.4,300.7V311.1M746.8,300.7V306.7M756.3,296.3V306.7M757.9,291.9V302.3M764.2,291.9V297.9M765.8,278.7V297.9M776.9,296.3V306.7M778.4,278.7V297.9M781.6,296.3V302.3M783.2,287.5V297.9M784.8,274.3V289.1M791.1,269.9V275.9M792.7,265.5V271.5M808.5,278.7V284.7M813.3,265.5V271.5M849.7,269.9V275.9M851.3,265.5V271.5M856.0,261.1V267.1M859.2,252.3V258.3M860.8,247.9V253.9M862.4,239.1V249.5M870.3,247.9V253.9M886.1,252.3V262.7M887.7,243.5V253.9M895.6,230.2V236.2M897.2,225.8V236.2M901.9,230.2V240.7M909.9,225.8V231.8M911.4,221.4V231.8M914.6,221.4V231.8M924.1,217.0V223.0M925.7,208.2V218.6M930.4,212.6V218.6M936.8,208.2V218.6M939.9,203.8V214.2M941.5,199.4V205.4M943.1,195.0V201.0M949.4,195.0V201.0M951.0,190.6V196.6M957.4,186.2V196.6M958.9,177.4V187.8M963.7,190.6V201.0M965.3,181.8V192.2M966.9,168.6V179.0M968.4,159.8V170.2M1011.2,186.2V192.2M1030.2,181.8V187.8M1033.4,177.4V187.8M1044.4,159.8V179.0M1050.8,137.7V152.5M1055.5,124.5V134.9M1057.1,120.1V126.1M1058.7,115.7V121.7M1084.0,133.3V139.3M1093.5,133.3V139.3M1096.7,133.3V139.3M1098.3,128.9V134.9M1104.6,137.7V143.7M1109.4,146.5V156.9M1112.5,150.9V161.3M1114.1,142.1V156.9M1115.7,137.7V152.5M1117.3,133.3V143.7M1131.5,137.7V152.5M1133.1,137.7V143.7M1136.3,128.9V134.9M1141.0,124.5V130.5M1144.2,128.9V134.9M1148.9,120.1V130.5M1150.5,115.7V126.1M1155.3,106.9V112.9M1156.9,102.5V108.5M1158.4,98.1V108.5M1175.9,115.7V130.5M1177.4,111.3V121.7M1182.2,111.3V117.3M1185.4,106.9V117.3M1209.1,142.1V152.5M1213.9,142.1V152.5M1215.4,142.1V148.1M1218.6,137.7V143.7M1221.8,128.9V139.3M1228.1,150.9V156.9M1229.7,155.3V161.3M1237.6,155.3V161.3M1240.8,142.1V152.5M1243.9,137.7V143.7M1248.7,164.2V170.2M1250.3,150.9V165.7M1251.9,142.1V152.5M1275.6,159.8V165.7M1278.8,150.9V161.3M1280.3,146.5V152.5M1285.1,150.9V156.9M1291.4,150.9V156.9M1294.6,146.5V152.5M1296.2,142.1V148.1M1304.1,164.2V183.4M1305.7,164.2V170.2M1307.3,155.3V170.2M1310.4,150.9V156.9M1315.2,137.7V148.1M1316.8,137.7V148.1M1318.3,137.7V143.7M1334.2,190.6V201.0M1337.3,195.0V201.0M1338.9,186.2V201.0M1345.3,203.8V214.2M1346.8,190.6V209.8M1348.4,177.4V192.2M1356.3,195.0V205.4M1357.9,190.6V196.6M1359.5,181.8V196.6M1365.8,243.5V293.5M1370.6,256.7V275.9M1373.8,239.1V271.5M1375.3,239.1V262.7M1383.3,221.4V258.3M1389.6,274.3V284.7M1391.2,252.3V275.9M1395.9,239.1V271.5M1397.5,230.2V245.1M1399.1,217.0V236.2M1400.7,217.0V240.7M1408.6,225.8V262.7M1410.2,221.4V236.2M1411.8,221.4V236.2M1413.3,217.0V231.8M1414.9,212.6V223.0M1416.5,208.2V223.0M1419.7,203.8V214.2M1429.2,203.8V223.0M1432.3,217.0V223.0M1433.9,208.2V218.6M1435.5,203.8V214.2M1437.1,190.6V209.8M1438.7,186.2V196.6M1440.3,186.2V196.6M1441.8,195.0V201.0M1443.4,190.6V201.0M1445.0,177.4V201.0M1446.6,181.8V192.2M1448.2,168.6V183.4M1449.8,168.6V179.0M1451.3,159.8V170.2M1459.3,181.8V192.2M1460.8,173.0V192.2M1462.4,164.2V183.4M1465.6,159.8V179.0M1468.8,150.9V174.6M1470.3,146.5V161.3M1471.9,146.5V156.9M1476.7,146.5V161.3M1478.3,142.1V152.5M1490.9,181.8V187.8M1495.7,181.8V196.6M1497.3,177.4V196.6M1498.8,173.0V187.8M1517.8,173.0V192.2M1519.4,173.0V179.0M1532.1,190.6V201.0M1533.7,190.6V196.6M1541.6,203.8V214.2M1546.3,208.2V223.0M1547.9,199.4V209.8M1555.8,203.8V209.8M1563.8,217.0V227.4M1566.9,212.6V218.6M1568.5,208.2V214.2M1570.1,208.2V214.2M1574.8,203.8V218.6M1576.4,195.0V205.4M1578.0,181.8V196.6M1579.6,177.4V183.4M1581.2,173.0V179.0M1589.1,177.4V183.4M1590.7,168.6V183.4M1592.3,168.6V174.6M1593.8,164.2V170.2M1598.6,173.0V179.0M1612.8,164.2V170.2M1616.0,159.8V165.7M1619.2,155.3V161.3M1630.3,159.8V165.7M1638.2,155.3V165.7M1641.3,150.9V156.9M1642.9,142.1V152.5M1649.3,155.3V161.3M1652.4,146.5V156.9M1658.8,146.5V152.5M1666.7,150.9V156.9M1677.8,168.6V179.0M1679.3,164.2V174.6M1680.9,155.3V165.7M1682.5,150.9V156.9M1685.7,146.5V152.5M1687.3,137.7V152.5M1690.4,124.5V130.5M1692.0,120.1V126.1M1693.6,115.7V121.7M1706.3,120.1V126.1M1718.9,93.7V99.7M1723.7,98.1V104.1M1756.9,111.3V117.3M1772.8,111.3V117.3M1825.0,137.7V143.7M1837.7,137.7V143.7M1842.4,124.5V130.5M1910.5,133.3V139.3" stroke="#ff0000" stroke-width="1.59" fill="none"/>
<path d="M13.7,327.2V328.8M16.9,336.0V337.6M21.6,331.6V333.2M27.9,336.0V337.6M29.5,336.0V337.6M31.1,336.0V337.6M34.3,340.4V342.0M35.9,340.4V342.0M37.4,340.4V342.0M39.0,336.0V337.6M43.8,331.6V333.2M50.1,322.8V324.4M51.7,318.4V320.0M54.9,327.2V328.8M56.4,331.6V333.2M59.6,322.8V324.4M61.2,322.8V324.4M65.9,314.0V315.6M70.7,305.2V306.7M72.3,300.7V302.3M75.4,296.3V297.9M77.0,296.3V302.3M81.8,287.5V289.1M83.4,287.5V289.1M84.9,283.1V284.7M88.1,283.1V284.7M91.3,274.3V275.9M94.4,278.7V280.3M97.6,291.9V293.5M99.2,296.3V297.9M102.4,305.2V306.7M105.5,291.9V293.5M108.7,287.5V289.1M113.4,291.9V293.5M116.6,296.3V297.9M118.2,287.5V293.5M119.8,291.9V293.5M126.1,296.3V297.9M129.3,300.7V302.3M132.4,300.7V302.3M137.2,291.9V293.5M138.8,291.9V293.5M141.9,283.1V289.1M146.7,287.5V289.1M151.4,278.7V280.3M157.8,283.1V284.7M159.4,283.1V284.7M162.5,283.1V284.7M164.1,283.1V284.7M165.7,283.1V284.7M168.9,274.3V275.9M170.4,274.3V275.9M195.8,300.7V302.3M199.0,296.3V297.9M205.3,309.6V311.1M206.9,309.6V311.1M208.5,309.6V311.1M210.0,318.4V320.0M211.6,318.4V320.0M214.8,331.6V333.2M219.5,336.0V337.6M227.5,327.2V328.8M230.6,331.6V333.2M232.2,331.6V333.2M237.0,340.4V342.0M241.7,340.4V342.0M243.3,336.0V337.6M244.9,331.6V333.2M246.5,331.6V333.2M248.0,327.2V337.6M249.6,331.6V333.2M251.2,331.6V333.2M252.8,322.8V324.4M254.4,318.4V320.0M257.5,314.0V315.6M267.0,318.4V324.4M273.4,322.8V324.4M276.5,318.4V320.0M284.5,331.6V333.2M286.0,327.2V328.8M287.6,322.8V324.4M289.2,327.2V328.8M290.8,327.2V328.8M295.5,318.4V320.0M297.1,318.4V320.0M300.3,309.6V311.1M308.2,314.0V315.6M309.8,318.4V320.0M316.1,322.8V328.8M317.7,318.4V324.4M322.5,309.6V311.1M324.0,305.2V306.7M325.6,305.2V306.7M335.1,296.3V297.9M338.3,300.7V302.3M339.9,296.3V306.7M341.5,296.3V302.3M346.2,287.5V297.9M349.4,296.3V297.9M352.5,291.9V293.5M354.1,296.3V297.9M357.3,287.5V289.1M360.5,283.1V284.7M362.0,283.1V284.7M370.0,300.7V302.3M371.5,300.7V302.3M373.1,305.2V306.7M374.7,309.6V311.1M376.3,309.6V311.1M377.9,314.0V315.6M379.5,314.0V315.6M381.0,318.4V320.0M387.4,331.6V333.2M392.1,353.6V355.2M395.3,353.6V355.2M400.0,327.2V328.8M403.2,327.2V328.8M404.8,327.2V333.2M409.5,314.0V315.6M414.3,309.6V311.1M415.9,309.6V311.1M417.5,309.6V311.1M423.8,287.5V289.1M425.4,287.5V289.1M433.3,287.5V289.1M439.6,283.1V284.7M442.8,283.1V284.7M455.5,261.1V262.7M458.6,252.3V253.9M460.2,252.3V253.9M461.8,256.7V258.3M463.4,256.7V258.3M468.1,261.1V262.7M469.7,261.1V262.7M471.3,261.1V262.7M474.5,265.5V267.1M476.0,261.1V262.7M479.2,269.9V271.5M482.4,274.3V275.9M487.1,265.5V267.1M488.7,256.7V258.3M491.9,243.5V249.5M493.4,247.9V249.5M495.0,252.3V253.9M498.2,256.7V258.3M499.8,261.1V262.7M502.9,256.7V262.7M504.5,265.5V267.1M506.1,265.5V267.1M507.7,261.1V262.7M514.0,256.7V258.3M515.6,256.7V258.3M517.2,261.1V262.7M520.4,265.5V267.1M525.1,252.3V253.9M528.3,256.7V258.3M529.9,256.7V258.3M531.4,261.1V262.7M534.6,265.5V267.1M536.2,265.5V267.1M537.8,269.9V271.5M539.4,274.3V275.9M542.5,265.5V267.1M544.1,261.1V262.7M548.9,247.9V249.5M552.0,247.9V249.5M553.6,252.3V253.9M561.5,261.1V262.7M563.1,256.7V258.3M564.7,256.7V258.3M566.3,256.7V258.3M567.9,256.7V258.3M571.0,261.1V262.7M572.6,265.5V267.1M574.2,265.5V267.1M575.8,265.5V271.5M577.4,265.5V267.1M578.9,265.5V267.1M580.5,265.5V267.1M586.9,261.1V262.7M591.6,269.9V271.5M593.2,269.9V271.5M596.4,261.1V262.7M601.1,261.1V262.7M602.7,261.1V262.7M609.0,265.5V267.1M613.8,265.5V267.1M615.4,265.5V267.1M616.9,265.5V267.1M618.5,269.9V271.5M626.4,269.9V271.5M628.0,269.9V275.9M634.4,265.5V267.1M642.3,291.9V293.5M647.0,283.1V284.7M648.6,283.1V284.7M650.2,283.1V284.7M651.8,283.1V284.7M654.9,287.5V289.1M659.7,283.1V284.7M661.3,283.1V284.7M662.9,274.3V275.9M664.4,278.7V280.3M667.6,278.7V280.3M669.2,283.1V284.7M670.8,287.5V289.1M675.5,300.7V302.3M685.0,336.0V337.6M686.6,336.0V337.6M692.9,314.0V315.6M696.1,318.4V320.0M700.9,314.0V315.6M702.4,314.0V315.6M704.0,314.0V315.6M705.6,314.0V315.6M710.4,327.2V328.8M713.5,322.8V324.4M715.1,322.8V324.4M719.9,314.0V315.6M723.0,300.7V302.3M730.9,305.2V306.7M735.7,327.2V328.8M742.0,300.7V302.3M745.2,305.2V306.7M748.4,300.7V302.3M753.1,309.6V311.1M759.4,291.9V293.5M761.0,291.9V293.5M767.4,287.5V289.1M772.1,300.7V302.3M773.7,300.7V302.3M786.4,269.9V271.5M787.9,269.9V271.5M789.5,274.3V275.9M794.3,265.5V267.1M799.0,261.1V262.7M802.2,274.3V275.9M803.8,269.9V271.5M810.1,274.3V275.9M811.7,269.9V271.5M814.9,265.5V267.1M819.6,265.5V271.5M821.2,265.5V267.1M824.4,269.9V271.5M827.5,269.9V271.5M829.1,269.9V271.5M830.7,269.9V271.5M835.4,283.1V284.7M838.6,274.3V275.9M840.2,269.9V271.5M841.8,265.5V271.5M844.9,269.9V271.5M848.1,274.3V275.9M852.9,265.5V267.1M854.4,269.9V271.5M857.6,261.1V262.7M865.5,243.5V245.1M867.1,239.1V240.7M873.4,252.3V253.9M875.0,252.3V253.9M878.2,252.3V253.9M879.8,252.3V253.9M881.4,256.7V258.3M884.5,256.7V262.7M889.3,239.1V240.7M890.9,234.7V240.7M892.4,234.7V236.2M894.0,234.7V236.2M903.5,230.2V231.8M905.1,230.2V231.8M906.7,225.8V236.2M908.3,225.8V231.8M913.0,225.8V227.4M916.2,217.0V218.6M917.8,212.6V214.2M922.5,221.4V223.0M927.3,208.2V209.8M932.0,212.6V214.2M935.2,217.0V218.6M938.4,212.6V214.2M944.7,195.0V196.6M946.3,195.0V196.6M954.2,195.0V196.6M970.0,159.8V161.3M971.6,159.8V161.3M973.2,159.8V161.3M976.4,164.2V165.7M977.9,159.8V161.3M982.7,168.6V170.2M984.3,168.6V170.2M985.9,168.6V170.2M990.6,186.2V187.8M992.2,190.6V192.2M995.4,186.2V187.8M1000.1,195.0V196.6M1001.7,195.0V196.6M1004.9,195.0V196.6M1006.4,195.0V196.6M1009.6,186.2V192.2M1012.8,186.2V187.8M1014.4,186.2V187.8M1017.5,195.0V196.6M1019.1,199.4V201.0M1023.9,195.0V196.6M1025.4,190.6V192.2M1027.0,186.2V187.8M1028.6,186.2V187.8M1031.8,186.2V187.8M1034.9,173.0V174.6M1036.5,173.0V174.6M1041.3,181.8V183.4M1042.9,177.4V179.0M1046.0,155.3V156.9M1047.6,150.9V152.5M1049.2,146.5V148.1M1052.4,133.3V139.3M1053.9,128.9V130.5M1061.9,120.1V121.7M1065.0,124.5V126.1M1072.9,137.7V139.3M1076.1,137.7V139.3M1077.7,133.3V139.3M1079.3,137.7V139.3M1080.9,137.7V139.3M1082.4,137.7V139.3M1085.6,133.3V134.9M1088.8,137.7V139.3M1090.4,133.3V139.3M1095.1,137.7V139.3M1099.9,128.9V130.5M1101.4,133.3V134.9M1103.0,137.7V139.3M1107.8,155.3V156.9M1110.9,150.9V152.5M1118.9,137.7V139.3M1120.4,133.3V134.9M1123.6,142.1V143.7M1125.2,142.1V148.1M1126.8,142.1V143.7M1128.4,142.1V143.7M1137.9,128.9V130.5M1139.4,128.9V130.5M1145.8,128.9V130.5M1147.4,128.9V130.5M1152.1,111.3V112.9M1153.7,111.3V112.9M1160.0,98.1V99.7M1161.6,98.1V99.7M1163.2,102.5V104.1M1171.1,128.9V130.5M1172.7,128.9V130.5M1174.3,128.9V130.5M1180.6,111.3V112.9M1183.8,111.3V112.9M1191.7,115.7V121.7M1194.9,128.9V130.5M1199.6,142.1V143.7M1202.8,146.5V152.5M1204.4,150.9V152.5M1205.9,150.9V152.5M1210.7,142.1V143.7M1212.3,146.5V148.1M1217.0,142.1V148.1M1220.2,137.7V139.3M1223.4,133.3V134.9M1224.9,137.7V139.3M1231.3,150.9V152.5M1232.9,155.3V156.9M1234.4,159.8V161.3M1236.0,159.8V161.3M1239.2,150.9V152.5M1242.4,142.1V143.7M1247.1,168.6V170.2M1253.4,142.1V143.7M1259.8,150.9V156.9M1262.9,155.3V161.3M1264.5,155.3V156.9M1270.8,164.2V165.7M1272.4,164.2V165.7M1274.0,164.2V165.7M1277.2,159.8V165.7M1283.5,155.3V156.9M1286.7,146.5V148.1M1293.0,146.5V152.5M1308.8,159.8V161.3M1312.0,150.9V156.9M1323.1,133.3V143.7M1332.6,195.0V196.6M1350.0,177.4V187.8M1351.6,186.2V187.8M1367.4,243.5V267.1M1372.2,256.7V258.3M1381.7,234.7V249.5M1392.8,256.7V258.3M1421.3,199.4V205.4M1422.8,203.8V205.4M1426.0,208.2V214.2M1457.7,190.6V192.2M1467.2,168.6V179.0M1473.5,146.5V152.5M1494.1,186.2V192.2M1502.0,181.8V187.8M1503.6,181.8V183.4M1505.2,181.8V183.4M1506.8,181.8V183.4M1508.3,181.8V183.4M1511.5,190.6V192.2M1513.1,190.6V192.2M1514.7,190.6V192.2M1516.3,186.2V187.8M1524.2,186.2V187.8M1525.8,190.6V192.2M1530.5,199.4V201.0M1536.8,203.8V205.4M1543.2,208.2V209.8M1549.5,199.4V201.0M1554.3,208.2V209.8M1559.0,217.0V218.6M1560.6,217.0V218.6M1571.7,212.6V214.2M1573.3,212.6V214.2M1582.8,173.0V174.6M1584.3,173.0V179.0M1585.9,173.0V174.6M1600.2,173.0V174.6M1603.3,168.6V170.2M1604.9,168.6V170.2M1606.5,168.6V170.2M1608.1,168.6V170.2M1611.3,168.6V170.2M1617.6,159.8V161.3M1620.8,155.3V156.9M1623.9,159.8V161.3M1627.1,164.2V165.7M1628.7,164.2V165.7M1631.8,159.8V161.3M1635.0,164.2V165.7M1636.6,159.8V161.3M1644.5,146.5V148.1M1650.8,150.9V156.9M1654.0,150.9V152.5M1655.6,146.5V148.1M1657.2,150.9V152.5M1661.9,155.3V156.9M1665.1,155.3V156.9M1688.8,133.3V134.9M1695.2,115.7V117.3M1696.8,115.7V117.3M1701.5,124.5V126.1M1703.1,124.5V126.1M1704.7,124.5V126.1M1707.8,115.7V117.3M1712.6,106.9V108.5M1714.2,106.9V108.5M1717.3,102.5V104.1M1722.1,93.7V95.3M1725.3,106.9V108.5M1726.8,106.9V108.5M1731.6,120.1V121.7M1734.8,124.5V126.1M1736.3,124.5V126.1M1742.7,106.9V108.5M1744.3,106.9V108.5M1745.8,106.9V108.5M1749.0,111.3V112.9M1752.2,115.7V117.3M1753.8,115.7V117.3M1755.3,115.7V117.3M1760.1,115.7V117.3M1763.3,111.3V112.9M1764.8,111.3V112.9M1768.0,106.9V108.5M1769.6,102.5V108.5M1775.9,120.1V121.7M1777.5,128.9V130.5M1779.1,137.7V139.3M1785.4,124.5V126.1M1788.6,128.9V130.5M1790.2,124.5V126.1M1793.3,115.7V117.3M1796.5,120.1V121.7M1801.3,128.9V130.5M1802.8,124.5V126.1M1804.4,133.3V134.9M1809.2,137.7V139.3M1810.8,137.7V139.3M1812.3,137.7V139.3M1817.1,142.1V143.7M1821.8,146.5V148.1M1826.6,137.7V139.3M1829.8,142.1V143.7M1831.3,142.1V143.7M1832.9,137.7V139.3M1839.3,137.7V139.3M1840.8,128.9V130.5M1845.6,124.5V130.5M1847.2,128.9V130.5M1850.3,142.1V143.7M1853.5,146.5V148.1M1859.8,146.5V148.1M1861.4,146.5V148.1M1863.0,142.1V143.7M1869.3,142.1V143.7M1872.5,137.7V139.3M1875.7,142.1V143.7M1878.8,146.5V148.1M1880.4,146.5V148.1M1885.2,142.1V143.7M1886.8,142.1V143.7M1888.3,142.1V143.7M1893.1,137.7V139.3M1897.8,142.1V143.7M1899.4,146.5V148.1M1901.0,142.1V143.7M1902.6,137.7V139.3M1907.3,133.3V134.9M1912.1,133.3V134.9M1913.7,137.7V139.3M1916.8,142.1V143.7M1918.4,142.1V143.7M1920.0,137.7V139.3M1921.6,150.9V152.5M1923.2,146.5V148.1" stroke="#ffff80" stroke-width="1.59" fill="none"/>
<path d="M31.5,433.4V436.9M126.5,427.9V431.4M181.5,453.7V459.0M184.7,451.9V462.7M186.3,459.3V462.7M187.9,457.4V464.5M191.0,457.4V460.9M192.6,459.3V462.7M194.2,461.1V464.5M195.8,463.0V468.2M203.7,463.0V466.4M205.3,464.8V468.2M211.6,461.1V466.4M213.2,461.1V471.9M214.8,466.6V473.8M216.4,468.5V477.5M218.0,475.9V481.1M219.5,477.7V486.7M221.1,479.5V484.8M222.7,477.7V484.8M232.2,477.7V488.5M243.3,481.4V484.8M244.9,481.4V488.5M246.5,481.4V492.2M248.0,490.6V495.9M249.6,494.3V501.4M251.2,498.0V505.1M252.8,501.7V507.0M256.0,507.2V516.2M259.1,520.1V530.9M263.9,518.3V527.2M265.5,523.8V538.3M267.0,534.9V545.7M268.6,545.9V553.1M270.2,549.6V586.2M289.2,538.6V553.1M303.5,557.0V560.4M314.5,562.5V566.0M316.1,568.1V571.5M328.8,566.2V569.7M330.4,564.4V567.8M344.6,547.8V551.2M346.2,553.3V556.7M347.8,551.5V556.7M349.4,555.2V558.6M365.2,542.2V545.7M374.7,534.9V538.3M377.9,536.7V540.1M379.5,538.6V542.0M387.4,540.4V543.8M392.1,545.9V549.4M393.7,549.6V553.1M401.6,557.0V560.4M404.8,562.5V566.0M406.4,566.2V569.7M409.5,569.9V573.3M419.0,573.6V577.0M423.8,575.4V578.9M433.3,573.6V577.0M434.9,573.6V577.0M455.5,568.1V571.5M465.0,566.2V569.7M474.5,562.5V566.0M479.2,566.2V569.7M499.8,558.8V562.3M504.5,560.7V564.1M514.0,558.8V564.1M518.8,566.2V569.7M528.3,562.5V566.0M536.2,566.2V569.7M547.3,571.7V575.2M550.4,573.6V577.0M558.4,579.1V582.6M559.9,581.0V584.4M575.8,584.7V588.1M580.5,588.3V591.8M582.1,588.3V591.8M601.1,581.0V584.4M609.0,586.5V589.9M613.8,588.3V591.8M647.0,588.3V591.8M648.6,588.3V591.8M650.2,590.2V593.6M675.5,582.8V586.2M680.3,586.5V589.9M694.5,582.8V586.2M730.9,579.1V582.6M734.1,581.0V584.4M773.7,564.4V567.8M781.6,584.7V589.9M795.9,588.3V593.6M797.4,590.2V593.6M822.8,590.2V593.6M833.9,586.5V589.9M835.4,592.0V595.5M846.5,582.8V586.2M862.4,553.3V556.7M882.9,564.4V567.8M897.2,547.8V551.2M900.4,555.2V560.4M919.4,555.2V558.6M928.9,551.5V554.9M930.4,558.8V562.3M944.7,549.6V553.1M946.3,551.5V554.9M971.6,553.3V556.7M976.4,553.3V556.7M977.9,551.5V554.9M982.7,551.5V554.9M984.3,551.5V554.9M987.4,551.5V554.9M989.0,553.3V556.7M992.2,555.2V558.6M1014.4,549.6V553.1M1020.7,557.0V560.4M1027.0,557.0V560.4M1031.8,558.8V564.1M1061.9,523.8V529.1M1069.8,525.6V530.9M1074.5,520.1V523.6M1085.6,522.0V525.4M1093.5,507.2V510.6M1095.1,510.9V514.3M1096.7,512.7V516.2M1109.4,520.1V523.6M1122.0,516.4V519.9M1123.6,523.8V527.2M1137.9,514.6V518.0M1139.4,516.4V519.9M1141.0,516.4V519.9M1156.9,512.7V516.2M1166.4,507.2V512.5M1191.7,510.9V514.3M1212.3,510.9V516.2M1213.9,510.9V527.2M1215.4,522.0V529.1M1217.0,527.5V534.6M1218.6,534.9V540.1M1226.5,533.0V540.1M1228.1,538.6V542.0M1232.9,538.6V542.0M1234.4,542.2V549.4M1245.5,540.4V547.5M1248.7,540.4V545.7M1250.3,542.2V547.5M1256.6,544.1V547.5M1258.2,545.9V553.1M1259.8,549.6V556.7M1261.4,551.5V560.4M1262.9,555.2V562.3M1266.1,566.2V575.2M1269.3,571.7V575.2M1272.4,573.6V578.9M1277.2,575.4V582.6M1281.9,577.3V582.6M1285.1,581.0V591.8M1286.7,590.2V597.3M1288.3,593.9V601.0M1289.8,597.6V608.4M1299.3,592.0V606.5M1300.9,601.3V621.3M1302.5,612.3V652.6M1313.6,616.0V630.5M1315.2,625.2V632.3M1316.8,628.9V636.0M1318.3,632.6V641.6M1319.9,636.3V645.3M1327.8,621.5V628.7M1329.4,621.5V634.2M1331.0,628.9V637.9M1338.9,625.2V632.3M1340.5,628.9V637.9M1343.7,632.6V637.9M1345.3,634.4V639.7M1346.8,630.8V639.7M1348.4,630.8V639.7M1350.0,634.4V643.4M1353.2,634.4V641.6M1359.5,632.6V639.7M1361.1,636.3V643.4M1362.7,640.0V648.9M1364.3,643.7V654.5M1365.8,645.5V656.3M1367.4,649.2V656.3M1370.6,663.9V671.1M1372.2,663.9V672.9M1373.8,667.6V678.4M1386.4,630.8V654.5M1427.6,603.1V606.5M1429.2,603.1V608.4M1433.9,608.6V612.1M1440.3,601.3V606.5M1443.4,601.3V604.7M1451.3,593.9V601.0M1454.5,595.7V601.0M1456.1,599.4V610.2M1457.7,606.8V619.4M1459.3,612.3V615.8M1468.8,610.5V613.9M1471.9,612.3V615.8M1475.1,616.0V619.4M1484.6,608.6V612.1M1495.7,616.0V621.3M1497.3,616.0V621.3M1500.4,621.5V628.7M1502.0,627.1V630.5M1503.6,627.1V637.9M1514.7,627.1V632.3M1516.3,628.9V636.0M1517.8,632.6V639.7M1521.0,638.1V648.9M1522.6,643.7V654.5M1524.2,651.0V660.0M1527.3,658.4V667.4M1540.0,656.6V661.9M1541.6,654.7V665.5M1544.8,662.1V669.2M1552.7,652.9V660.0M1562.2,656.6V667.4M1565.3,663.9V671.1M1566.9,663.9V671.1M1568.5,669.5V678.4M1570.1,673.2V685.8M1571.7,678.7V685.8M1582.8,658.4V665.5M1587.5,662.1V667.4M1589.1,663.9V667.4M1654.0,647.4V650.8M1685.7,667.6V671.1M1692.0,656.6V660.0M1706.3,649.2V652.6M1728.4,656.6V660.0M1817.1,660.3V663.7M1904.2,654.7V658.2" stroke="#0080ff" stroke-width="1.59" fill="none"/>
<path d="M28.4,437.1V440.6M44.2,435.3V438.7M74.3,429.8V433.2M80.6,426.1V429.5M82.2,427.9V431.4M83.8,427.9V431.4M88.5,429.8V433.2M107.5,427.9V431.4M176.8,459.3V466.4M178.4,455.6V462.7M180.0,453.7V460.9M183.1,451.9V455.3M197.4,463.0V470.1M199.0,463.0V470.1M208.5,463.0V466.4M224.3,481.4V484.8M227.5,477.7V486.7M229.0,475.9V481.1M235.4,481.4V484.8M237.0,483.2V486.7M238.5,481.4V484.8M241.7,479.5V484.8M260.7,525.6V530.9M262.3,518.3V527.2M271.8,582.8V588.1M273.4,558.8V586.2M275.0,555.2V562.3M276.5,553.3V558.6M284.5,551.5V558.6M286.0,545.9V556.7M287.6,538.6V549.4M292.4,549.6V556.7M300.3,549.6V553.1M305.0,557.0V560.4M308.2,553.3V556.7M313.0,555.2V558.6M320.9,568.1V573.3M322.5,568.1V571.5M325.6,564.4V567.8M333.5,558.8V562.3M336.7,555.2V558.6M357.3,542.2V545.7M362.0,540.4V543.8M370.0,536.7V542.0M371.5,534.9V538.3M385.8,538.6V542.0M395.3,551.5V554.9M398.5,553.3V556.7M425.4,577.3V580.7M431.7,571.7V575.2M438.0,569.9V573.3M450.7,568.1V573.3M453.9,566.2V571.5M458.6,566.2V569.7M460.2,566.2V569.7M468.1,564.4V567.8M477.6,558.8V562.3M483.9,569.9V573.3M491.9,560.7V566.0M493.4,558.8V562.3M495.0,557.0V560.4M512.4,560.7V564.1M525.1,564.4V567.8M526.7,560.7V564.1M539.4,573.6V577.0M542.5,573.6V577.0M563.1,582.8V586.2M566.3,586.5V589.9M569.4,586.5V589.9M586.9,590.2V593.6M593.2,582.8V586.2M597.9,581.0V584.4M623.3,584.7V588.1M624.9,582.8V586.2M626.4,581.0V584.4M629.6,581.0V584.4M637.5,586.5V589.9M643.9,588.3V591.8M651.8,592.0V595.5M658.1,588.3V593.6M659.7,586.5V589.9M664.4,581.0V584.4M683.4,590.2V593.6M685.0,588.3V591.8M686.6,584.7V588.1M707.2,581.0V584.4M719.9,581.0V584.4M724.6,579.1V582.6M726.2,577.3V580.7M740.4,577.3V580.7M754.7,573.6V577.0M756.3,573.6V577.0M761.0,575.4V578.9M764.2,577.3V580.7M767.4,562.5V566.0M778.4,568.1V571.5M792.7,588.3V591.8M794.3,586.5V589.9M806.9,586.5V589.9M808.5,588.3V591.8M841.8,575.4V578.9M843.4,573.6V577.0M851.3,581.0V584.4M856.0,573.6V577.0M857.6,558.8V562.3M860.8,549.6V553.1M871.9,568.1V571.5M873.4,569.9V573.3M886.1,562.5V566.0M894.0,549.6V553.1M901.9,551.5V554.9M903.5,549.6V553.1M908.3,557.0V562.3M911.4,555.2V558.6M924.1,551.5V554.9M936.8,558.8V562.3M938.4,553.3V556.7M939.9,553.3V556.7M941.5,551.5V554.9M943.1,549.6V553.1M955.8,555.2V558.6M958.9,553.3V556.7M963.7,553.3V558.6M973.2,551.5V554.9M974.8,553.3V556.7M981.1,551.5V554.9M985.9,549.6V553.1M993.8,553.3V556.7M1006.4,553.3V556.7M1011.2,547.8V551.2M1034.9,560.7V564.1M1038.1,555.2V558.6M1041.3,551.5V554.9M1044.4,551.5V554.9M1047.6,547.8V551.2M1049.2,545.9V549.4M1050.8,542.2V545.7M1053.9,527.5V530.9M1076.1,518.3V521.7M1080.9,520.1V523.6M1087.2,516.4V519.9M1088.8,514.6V518.0M1098.3,512.7V516.2M1106.2,518.3V521.7M1126.8,523.8V527.2M1128.4,522.0V525.4M1136.3,516.4V519.9M1145.8,514.6V518.0M1147.4,512.7V516.2M1148.9,509.1V512.5M1158.4,512.7V516.2M1161.6,509.1V512.5M1163.2,505.4V508.8M1175.9,512.7V516.2M1180.6,512.7V516.2M1182.2,512.7V516.2M1190.1,509.1V512.5M1196.4,509.1V512.5M1201.2,510.9V514.3M1204.4,510.9V514.3M1205.9,509.1V514.3M1210.7,509.1V512.5M1221.8,534.9V540.1M1223.4,533.0V536.5M1231.3,536.7V542.0M1236.0,544.1V551.2M1237.6,542.2V545.7M1240.8,538.6V542.0M1270.8,573.6V578.9M1275.6,573.6V578.9M1280.3,577.3V584.4M1291.4,603.1V610.2M1293.0,595.7V608.4M1296.2,592.0V601.0M1297.8,592.0V599.2M1304.1,645.5V656.3M1305.7,638.1V650.8M1308.8,632.6V639.7M1310.4,619.7V636.0M1312.0,617.8V626.8M1321.5,627.1V643.4M1323.1,623.4V634.2M1324.7,617.8V625.0M1326.3,621.5V625.0M1332.6,628.9V636.0M1334.2,628.9V634.2M1335.8,625.2V632.3M1337.3,623.4V628.7M1351.6,636.3V639.7M1354.8,636.3V639.7M1357.9,634.4V637.9M1375.3,665.8V676.6M1376.9,658.4V669.2M1378.5,654.7V665.5M1380.1,649.2V658.2M1381.7,638.1V658.2M1383.3,638.1V645.3M1384.8,632.6V643.4M1391.2,638.1V648.9M1392.8,636.3V647.1M1394.3,632.6V643.4M1395.9,634.4V639.7M1397.5,630.8V639.7M1399.1,625.2V632.3M1405.4,623.4V626.8M1407.0,619.7V625.0M1408.6,619.7V623.1M1414.9,619.7V623.1M1416.5,616.0V623.1M1418.1,610.5V619.4M1419.7,606.8V613.9M1421.3,606.8V610.2M1424.4,603.1V608.4M1432.3,608.6V612.1M1435.5,606.8V612.1M1437.1,601.3V608.4M1441.8,601.3V604.7M1446.6,597.6V601.0M1449.8,592.0V601.0M1452.9,593.9V597.3M1460.8,610.5V615.8M1470.3,610.5V613.9M1476.7,614.2V617.6M1479.8,612.3V617.6M1481.4,610.5V613.9M1490.9,610.5V615.8M1492.5,612.3V615.8M1505.2,632.6V636.0M1528.9,662.1V665.5M1533.7,649.2V660.0M1543.2,658.4V661.9M1549.5,654.7V663.7M1551.1,654.7V658.2M1554.3,652.9V660.0M1560.6,654.7V663.7M1574.8,675.0V689.5M1576.4,665.8V678.4M1579.6,662.1V667.4M1584.3,660.3V665.5M1585.9,662.1V665.5M1606.5,662.1V665.5M1611.3,663.9V667.4M1614.4,662.1V665.5M1625.5,649.2V654.5M1679.3,660.3V663.7M1687.3,667.6V671.1M1693.6,651.0V656.3M1698.3,649.2V652.6M1758.5,654.7V658.2M1806.0,660.3V663.7M1851.9,656.6V660.0M1869.3,656.6V661.9M1882.0,662.1V665.5" stroke="#ff0000" stroke-width="1.59" fill="none"/>
<path d="M18.9,439.0V440.6M22.0,442.7V444.3M29.9,433.4V435.0M33.1,435.3V436.9M39.4,437.1V438.7M41.0,437.1V438.7M42.6,439.0V440.6M47.4,429.8V431.4M52.1,433.4V435.0M58.4,433.4V435.0M64.8,433.4V435.0M71.1,429.8V431.4M72.7,431.6V433.2M79.0,427.9V429.5M86.9,427.9V429.5M90.1,426.1V427.7M93.3,427.9V429.5M94.9,431.6V433.2M99.6,427.9V429.5M104.4,429.8V431.4M105.9,427.9V429.5M112.3,426.1V427.7M113.9,426.1V427.7M118.6,424.2V425.8M120.2,424.2V425.8M121.8,424.2V425.8M129.7,429.8V431.4M131.3,429.8V431.4M132.9,427.9V429.5M134.4,426.1V427.7M136.0,426.1V427.7M142.4,429.8V431.4M143.9,429.8V431.4M145.5,431.6V433.2M148.7,429.8V431.4M150.3,429.8V431.4M151.9,426.1V427.7M153.4,427.9V429.5M156.6,424.2V425.8M158.2,426.1V427.7M164.5,427.9V429.5M166.1,426.1V427.7M169.3,420.5V422.1M170.9,422.4V424.0M200.5,464.8V466.4M202.1,464.8V466.4M206.9,464.8V466.4M210.0,463.0V464.5M230.6,475.9V477.5M233.8,483.2V484.8M240.1,485.1V486.7M278.1,553.3V556.7M279.7,555.2V556.7M281.3,555.2V556.7M290.8,553.3V554.9M294.0,553.3V554.9M295.5,553.3V556.7M297.1,553.3V554.9M298.7,549.6V553.1M301.9,553.3V554.9M306.6,555.2V556.7M309.8,549.6V551.2M311.4,553.3V554.9M319.3,569.9V571.5M332.0,562.5V564.1M335.1,557.0V558.6M338.3,557.0V558.6M339.9,553.3V554.9M351.0,547.8V551.2M352.5,544.1V545.7M354.1,542.2V543.8M360.5,544.1V545.7M363.6,542.2V543.8M366.8,540.4V542.0M368.4,540.4V542.0M373.1,533.0V534.6M376.3,538.6V540.1M381.0,540.4V542.0M382.6,542.2V543.8M389.0,544.1V545.7M396.9,555.2V556.7M400.0,555.2V556.7M403.2,558.8V560.4M408.0,569.9V571.5M411.1,571.7V573.3M414.3,575.4V577.0M415.9,573.6V575.2M417.5,573.6V575.2M420.6,575.4V577.0M422.2,575.4V577.0M428.5,573.6V575.2M430.1,569.9V571.5M436.5,575.4V577.0M439.6,571.7V573.3M441.2,571.7V573.3M444.4,568.1V571.5M446.0,569.9V571.5M447.5,569.9V571.5M449.1,569.9V571.5M457.0,566.2V567.8M461.8,564.4V567.8M463.4,568.1V569.7M466.5,568.1V569.7M469.7,564.4V566.0M471.3,562.5V564.1M476.0,562.5V564.1M482.4,571.7V575.2M485.5,571.7V573.3M487.1,569.9V571.5M488.7,568.1V569.7M490.3,568.1V569.7M496.6,558.8V560.4M501.4,560.7V562.3M502.9,560.7V562.3M506.1,560.7V562.3M507.7,560.7V562.3M510.9,560.7V562.3M515.6,564.4V566.0M517.2,564.4V566.0M521.9,571.7V573.3M523.5,566.2V567.8M529.9,566.2V567.8M531.4,564.4V566.0M533.0,566.2V567.8M534.6,566.2V567.8M537.8,571.7V575.2M540.9,573.6V575.2M548.9,573.6V575.2M552.0,573.6V575.2M553.6,575.4V577.0M555.2,577.3V578.9M556.8,579.1V580.7M561.5,584.7V586.2M571.0,586.5V588.1M572.6,588.3V589.9M574.2,586.5V588.1M577.4,586.5V588.1M578.9,588.3V589.9M583.7,588.3V589.9M585.3,590.2V591.8M591.6,582.8V584.4M594.8,584.7V586.2M599.5,584.7V586.2M602.7,582.8V584.4M604.3,584.7V586.2M605.9,584.7V586.2M607.4,586.5V588.1M610.6,586.5V588.1M612.2,588.3V589.9M615.4,586.5V589.9M616.9,586.5V588.1M618.5,586.5V588.1M620.1,586.5V588.1M621.7,586.5V588.1M628.0,579.1V582.6M631.2,581.0V582.6M632.8,582.8V584.4M634.4,586.5V588.1M635.9,584.7V586.2M639.1,588.3V589.9M640.7,588.3V589.9M642.3,588.3V589.9M645.4,588.3V589.9M653.4,592.0V593.6M654.9,590.2V591.8M656.5,590.2V591.8M662.9,582.8V584.4M667.6,579.1V580.7M669.2,579.1V582.6M670.8,581.0V582.6M672.4,581.0V582.6M673.9,582.8V584.4M677.1,584.7V586.2M678.7,586.5V588.1M688.2,584.7V586.2M689.8,584.7V586.2M691.4,582.8V584.4M692.9,582.8V584.4M696.1,584.7V586.2M697.7,584.7V586.2M699.3,577.3V578.9M700.9,579.1V580.7M704.0,581.0V582.6M705.6,581.0V582.6M708.8,584.7V586.2M710.4,584.7V586.2M711.9,582.8V584.4M715.1,582.8V584.4M716.7,582.8V584.4M718.3,582.8V584.4M721.4,584.7V586.2M723.0,582.8V584.4M727.8,575.4V578.9M729.4,581.0V582.6M735.7,582.8V584.4M737.3,582.8V584.4M738.9,581.0V584.4M742.0,573.6V575.2M743.6,573.6V575.2M745.2,575.4V577.0M746.8,571.7V573.3M748.4,573.6V575.2M749.9,571.7V575.2M751.5,577.3V578.9M753.1,575.4V577.0M757.9,573.6V575.2M762.6,581.0V582.6M765.8,568.1V569.7M768.9,557.0V558.6M770.5,557.0V558.6M772.1,557.0V558.6M775.3,568.1V569.7M776.9,569.9V571.5M783.2,582.8V584.4M786.4,588.3V589.9M787.9,593.9V595.5M799.0,590.2V591.8M800.6,588.3V589.9M803.8,588.3V589.9M805.4,588.3V589.9M810.1,586.5V588.1M811.7,586.5V588.1M813.3,588.3V589.9M816.4,588.3V589.9M818.0,590.2V591.8M819.6,590.2V591.8M821.2,590.2V591.8M824.4,590.2V591.8M825.9,590.2V591.8M827.5,588.3V589.9M829.1,586.5V588.1M830.7,584.7V586.2M832.3,586.5V588.1M838.6,582.8V584.4M840.2,577.3V578.9M844.9,579.1V580.7M849.7,582.8V584.4M852.9,581.0V582.6M854.4,581.0V582.6M865.5,560.7V562.3M867.1,564.4V566.0M868.7,566.2V567.8M870.3,568.1V569.7M875.0,569.9V571.5M876.6,569.9V571.5M881.4,564.4V566.0M887.7,555.2V556.7M889.3,555.2V556.7M890.9,555.2V556.7M895.6,547.8V549.4M905.1,564.4V566.0M906.7,558.8V560.4M909.9,557.0V558.6M913.0,557.0V558.6M914.6,557.0V558.6M916.2,555.2V556.7M917.8,557.0V558.6M920.9,555.2V556.7M925.7,551.5V553.1M927.3,549.6V551.2M933.6,560.7V562.3M935.2,562.5V564.1M947.9,551.5V553.1M949.4,555.2V556.7M951.0,555.2V556.7M952.6,555.2V558.6M957.4,553.3V554.9M960.5,553.3V554.9M965.3,553.3V554.9M968.4,553.3V554.9M970.0,553.3V554.9M979.5,553.3V554.9M990.6,555.2V556.7M995.4,553.3V554.9M996.9,551.5V553.1M998.5,551.5V553.1M1000.1,553.3V554.9M1001.7,551.5V553.1M1003.3,553.3V554.9M1004.9,553.3V554.9M1009.6,549.6V551.2M1012.8,551.5V553.1M1015.9,551.5V553.1M1017.5,553.3V554.9M1019.1,555.2V556.7M1023.9,558.8V560.4M1025.4,558.8V560.4M1028.6,558.8V560.4M1030.2,562.5V564.1M1036.5,557.0V558.6M1039.7,553.3V554.9M1042.9,551.5V553.1M1046.0,549.6V551.2M1052.4,538.6V540.1M1055.5,523.8V525.4M1057.1,525.6V527.2M1058.7,525.6V527.2M1060.3,525.6V527.2M1063.4,525.6V527.2M1065.0,527.5V529.1M1068.2,523.8V527.2M1071.4,527.5V529.1M1077.7,518.3V519.9M1082.4,522.0V523.6M1084.0,522.0V523.6M1091.9,505.4V507.0M1099.9,520.1V521.7M1101.4,520.1V521.7M1103.0,520.1V521.7M1104.6,520.1V523.6M1110.9,522.0V523.6M1114.1,518.3V519.9M1115.7,514.6V516.2M1117.3,514.6V516.2M1118.9,514.6V516.2M1120.4,514.6V516.2M1125.2,523.8V525.4M1129.9,522.0V523.6M1133.1,522.0V523.6M1134.7,522.0V523.6M1142.6,518.3V519.9M1144.2,516.4V518.0M1150.5,509.1V510.6M1152.1,510.9V512.5M1153.7,514.6V516.2M1160.0,514.6V516.2M1164.8,509.1V510.6M1167.9,516.4V519.9M1169.5,514.6V516.2M1172.7,512.7V514.3M1174.3,512.7V514.3M1185.4,510.9V512.5M1186.9,510.9V512.5M1188.5,510.9V512.5M1193.3,512.7V514.3M1194.9,512.7V514.3M1198.0,512.7V514.3M1199.6,512.7V514.3M1202.8,512.7V514.3M1207.5,509.1V512.5M1209.1,510.9V512.5M1220.2,538.6V542.0M1224.9,534.9V538.3M1229.7,540.4V542.0M1239.2,540.4V542.0M1247.1,542.2V543.8M1251.9,547.8V551.2M1253.4,545.9V549.4M1255.0,544.1V545.7M1267.7,573.6V575.2M1274.0,577.3V578.9M1278.8,582.8V584.4M1294.6,595.7V599.2M1342.1,634.4V636.0M1356.3,638.1V641.6M1388.0,649.2V652.6M1400.7,625.2V630.5M1402.3,628.9V630.5M1403.8,627.1V628.7M1410.2,619.7V621.3M1411.8,621.5V623.1M1413.3,619.7V621.3M1422.8,603.1V608.4M1426.0,604.9V606.5M1430.8,606.8V608.4M1438.7,603.1V604.7M1445.0,597.6V601.0M1448.2,597.6V599.2M1462.4,608.6V612.1M1464.0,610.5V612.1M1465.6,612.3V613.9M1467.2,612.3V615.8M1473.5,614.2V617.6M1478.3,614.2V615.8M1483.0,608.6V610.2M1487.8,610.5V612.1M1494.1,616.0V617.6M1498.8,621.5V623.1M1508.3,628.9V630.5M1509.9,625.2V626.8M1513.1,625.2V626.8M1519.4,636.3V641.6M1535.3,652.9V654.5M1538.4,654.7V660.0M1546.3,662.1V665.5M1557.4,658.4V663.7M1563.8,662.1V667.4M1573.3,682.4V689.5M1578.0,665.8V667.4M1592.3,663.9V665.5M1597.0,658.4V660.0M1603.3,660.3V661.9M1612.8,663.9V665.5M1617.6,656.6V660.0M1623.9,652.9V654.5M1628.7,649.2V650.8M1635.0,652.9V654.5M1638.2,647.4V648.9M1639.8,645.5V647.1M1641.3,645.5V647.1M1642.9,645.5V647.1M1644.5,641.8V643.4M1646.1,643.7V645.3M1649.3,645.5V647.1M1658.8,656.6V658.2M1663.5,662.1V663.7M1665.1,665.8V667.4M1666.7,665.8V667.4M1673.0,663.9V665.5M1680.9,662.1V663.7M1682.5,663.9V665.5M1684.1,663.9V665.5M1704.7,647.4V648.9M1707.8,652.9V654.5M1709.4,656.6V658.2M1714.2,656.6V658.2M1717.3,656.6V658.2M1723.7,656.6V658.2M1726.8,654.7V656.3M1730.0,656.6V658.2M1734.8,658.4V660.0M1736.3,656.6V658.2M1739.5,654.7V656.3M1741.1,654.7V658.2M1742.7,656.6V658.2M1745.8,656.6V658.2M1747.4,654.7V656.3M1749.0,652.9V654.5M1753.8,652.9V654.5M1760.1,654.7V656.3M1763.3,652.9V654.5M1764.8,654.7V656.3M1768.0,652.9V654.5M1769.6,654.7V656.3M1772.8,656.6V658.2M1775.9,658.4V660.0M1782.3,660.3V661.9M1787.0,660.3V661.9M1788.6,660.3V661.9M1793.3,658.4V660.0M1796.5,660.3V661.9M1799.7,660.3V663.7M1801.3,662.1V663.7M1807.6,660.3V661.9M1809.2,660.3V661.9M1810.8,660.3V661.9M1813.9,660.3V661.9M1815.5,662.1V663.7M1818.7,662.1V663.7M1820.3,660.3V661.9M1821.8,662.1V663.7M1823.4,660.3V661.9M1825.0,660.3V661.9M1826.6,660.3V661.9M1828.2,658.4V660.0M1829.8,660.3V661.9M1832.9,658.4V660.0M1834.5,656.6V658.2M1836.1,656.6V658.2M1839.3,656.6V658.2M1845.6,656.6V658.2M1853.5,658.4V660.0M1855.1,656.6V658.2M1856.7,660.3V661.9M1858.3,660.3V661.9M1861.4,660.3V661.9M1863.0,662.1V663.7M1864.6,660.3V661.9M1866.2,662.1V663.7M1867.8,660.3V661.9M1870.9,656.6V658.2M1874.1,660.3V661.9M1877.3,663.9V665.5M1878.8,663.9V665.5M1888.3,658.4V660.0M1891.5,656.6V658.2M1893.1,654.7V656.3M1894.7,654.7V656.3M1896.3,654.7V656.3M1897.8,654.7V656.3M1899.4,654.7V656.3M1901.0,654.7V656.3M1910.5,654.7V656.3M1916.8,656.6V658.2M1920.0,658.4V660.0M1923.2,656.6V658.2" stroke="#ffff80" stroke-width="1.59" fill="none"/>
<path d="M268.6,548V588.5M270.2,540V588.5" stroke="#0080ff" stroke-width="1.59" fill="none"/>
<path d="M271.8,558V588.5M273.4,556V575" stroke="#ff0000" stroke-width="1.59" fill="none"/>
<path d="M774.5,552V572M776.1,556V568" stroke="#ff0000" stroke-width="1.59" fill="none"/>
<path d="M777.7,557V578M779.3,560V592" stroke="#0080ff" stroke-width="1.59" fill="none"/>
<polyline points="13.7,1026.3 15.3,1027.9 16.9,1027.9 18.4,1024.8 20.0,1024.8 21.6,1023.2 23.2,1021.7 24.8,1021.7 26.4,1024.8 27.9,1024.8 29.5,1026.3 31.1,1029.4 32.7,1031.0 34.3,1034.1 35.9,1031.0 37.4,1031.0 39.0,1029.4 40.6,1029.4 42.2,1027.9 43.8,1024.8 45.4,1027.9 46.9,1032.5 48.5,1032.5 50.1,1032.5 51.7,1031.0 53.3,1027.9 54.9,1026.3 56.4,1024.8 58.0,1026.3 59.6,1026.3 61.2,1024.8 62.8,1024.8 64.4,1024.8 65.9,1020.1 67.5,1018.6 69.1,1021.7 70.7,1018.6 72.3,1018.6 73.9,1018.6 75.4,1020.1 77.0,1018.6 78.6,1020.1 80.2,1020.1 81.8,1018.6 83.4,1017.0 84.9,1017.0 86.5,1015.5 88.1,1013.9 89.7,1012.4 91.3,1013.9 92.9,1013.9 94.4,1015.5 96.0,1017.0 97.6,1018.6 99.2,1015.5 100.8,1020.1 102.4,1021.7 103.9,1018.6 105.5,1020.1 107.1,1020.1 108.7,1020.1 110.3,1017.0 111.9,1020.1 113.4,1020.1 115.0,1021.7 116.6,1020.1 118.2,1021.7 119.8,1023.2 121.4,1023.2 122.9,1021.7 124.5,1018.6 126.1,1018.6 127.7,1020.1 129.3,1018.6 130.9,1018.6 132.4,1020.1 134.0,1020.1 135.6,1017.0 137.2,1015.5 138.8,1015.5 140.4,1015.5 141.9,1018.6 143.5,1020.1 145.1,1018.6 146.7,1017.0 148.3,1018.6 149.9,1017.0 151.4,1017.0 153.0,1018.6 154.6,1017.0 156.2,1018.6 157.8,1020.1 159.4,1017.0 160.9,1017.0 162.5,1015.5 164.1,1013.9 165.7,1017.0 167.3,1015.5 168.9,1012.4 170.4,1017.0 172.0,1017.0 173.6,1017.0 175.2,1017.0 176.8,1023.2 178.4,993.8 179.9,995.4 181.5,995.4 183.1,993.8 184.7,993.8 186.3,990.7 187.9,987.6 189.4,987.6 191.0,989.2 192.6,989.2 194.2,990.7 195.8,990.7 197.4,987.6 198.9,989.2 200.5,987.6 202.1,989.2 203.7,992.3 205.3,993.8 206.9,996.9 208.4,996.9 210.0,998.5 211.6,996.9 213.2,1000.0 214.8,998.5 216.4,996.9 217.9,995.4 219.5,990.7 221.1,989.2 222.7,987.6 224.3,986.1 225.9,987.6 227.4,990.7 229.0,992.3 230.6,990.7 232.2,984.5 233.8,990.7 235.4,990.7 236.9,989.2 238.5,990.7 240.1,987.6 241.7,989.2 243.3,989.2 244.9,983.0 246.4,979.9 248.0,975.2 249.6,973.7 251.2,969.0 252.8,964.4 254.4,964.4 255.9,955.1 257.5,947.4 259.1,944.3 260.7,947.4 262.3,950.5 263.9,944.3 265.4,938.1 267.0,930.3 268.6,916.4 270.2,899.4 271.8,904.0 273.4,918.0 274.9,918.0 276.5,919.5 278.1,921.1 279.7,922.6 281.3,922.6 282.9,925.7 284.4,928.8 286.0,931.9 287.6,933.4 289.2,931.9 290.8,924.2 292.4,922.6 293.9,922.6 295.5,922.6 297.1,924.2 298.7,927.3 300.3,927.3 301.9,924.2 303.4,922.6 305.0,919.5 306.6,919.5 308.2,921.1 309.8,921.1 311.4,924.2 312.9,925.7 314.5,924.2 316.1,911.8 317.7,910.2 319.3,910.2 320.9,907.1 322.4,907.1 324.0,907.1 325.6,905.6 327.2,908.7 328.8,907.1 330.4,907.1 331.9,908.7 333.5,910.2 335.1,911.8 336.7,910.2 338.3,913.3 339.8,913.3 341.4,916.4 343.0,918.0 344.6,916.4 346.2,918.0 347.8,913.3 349.3,913.3 350.9,916.4 352.5,918.0 354.1,919.5 355.7,921.1 357.3,921.1 358.8,919.5 360.4,922.6 362.0,922.6 363.6,922.6 365.2,924.2 366.8,925.7 368.3,924.2 369.9,927.3 371.5,928.8 373.1,930.3 374.7,931.9 376.3,933.4 377.8,936.5 379.4,936.5 381.0,933.4 382.6,933.4 384.2,931.9 385.8,931.9 387.3,933.4 388.9,935.0 390.5,938.1 392.1,936.5 393.7,935.0 395.3,931.9 396.8,928.8 398.4,928.8 400.0,927.3 401.6,924.2 403.2,922.6 404.8,918.0 406.3,908.7 407.9,908.7 409.5,904.0 411.1,904.0 412.7,902.5 414.3,902.5 415.8,900.9 417.4,902.5 419.0,902.5 420.6,897.8 422.2,896.3 423.8,894.7 425.3,891.6 426.9,893.2 428.5,893.2 430.1,894.7 431.7,893.2 433.3,894.7 434.8,893.2 436.4,894.7 438.0,896.3 439.6,896.3 441.2,897.8 442.8,896.3 444.3,894.7 445.9,891.6 447.5,890.1 449.1,888.6 450.7,887.0 452.3,887.0 453.8,888.6 455.4,890.1 457.0,890.1 458.6,891.6 460.2,888.6 461.8,891.6 463.3,891.6 464.9,890.1 466.5,891.6 468.1,891.6 469.7,896.3 471.3,894.7 472.8,893.2 474.4,896.3 476.0,894.7 477.6,893.2 479.2,893.2 480.8,890.1 482.3,893.2 483.9,891.6 485.5,891.6 487.1,888.6 488.7,888.6 490.3,888.6 491.8,888.6 493.4,888.6 495.0,893.2 496.6,893.2 498.2,893.2 499.8,893.2 501.3,896.3 502.9,894.7 504.5,897.8 506.1,896.3 507.7,896.3 509.3,897.8 510.8,894.7 512.4,896.3 514.0,896.3 515.6,894.7 517.2,893.2 518.8,890.1 520.3,890.1 521.9,888.6 523.5,890.1 525.1,890.1 526.7,891.6 528.3,891.6 529.8,890.1 531.4,893.2 533.0,890.1 534.6,893.2 536.2,893.2 537.8,893.2 539.3,893.2 540.9,888.6 542.5,888.6 544.1,887.0 545.7,887.0 547.3,888.6 548.8,887.0 550.4,883.9 552.0,883.9 553.6,880.8 555.2,882.4 556.8,877.7 558.3,879.3 559.9,879.3 561.5,879.3 563.1,876.2 564.7,873.1 566.3,873.1 567.8,876.2 569.4,873.1 571.0,876.2 572.6,874.6 574.2,874.6 575.8,874.6 577.3,873.1 578.9,874.6 580.5,876.2 582.1,876.2 583.7,879.3 585.3,873.1 586.8,871.5 588.4,873.1 590.0,873.1 591.6,877.7 593.2,882.4 594.8,880.8 596.3,879.3 597.9,880.8 599.5,879.3 601.1,879.3 602.7,876.2 604.3,876.2 605.8,877.7 607.4,874.6 609.0,879.3 610.6,879.3 612.2,874.6 613.8,873.1 615.3,873.1 616.9,874.6 618.5,877.7 620.1,879.3 621.7,879.3 623.3,880.8 624.8,882.4 626.4,882.4 628.0,882.4 629.6,882.4 631.2,880.8 632.8,879.3 634.3,877.7 635.9,879.3 637.5,882.4 639.1,882.4 640.7,883.9 642.3,887.0 643.8,882.4 645.4,882.4 647.0,883.9 648.6,879.3 650.2,879.3 651.8,880.8 653.3,879.3 654.9,879.3 656.5,879.3 658.1,880.8 659.7,880.8 661.3,880.8 662.8,883.9 664.4,885.5 666.0,888.6 667.6,888.6 669.2,890.1 670.8,890.1 672.3,893.2 673.9,893.2 675.5,893.2 677.1,894.7 678.7,893.2 680.3,894.7 681.8,894.7 683.4,896.3 685.0,899.4 686.6,902.5 688.2,900.9 689.8,899.4 691.3,896.3 692.9,897.8 694.5,899.4 696.1,896.3 697.7,894.7 699.3,896.3 700.8,896.3 702.4,899.4 704.0,899.4 705.6,896.3 707.2,896.3 708.8,896.3 710.3,894.7 711.9,897.8 713.5,900.9 715.1,897.8 716.7,897.8 718.3,896.3 719.8,896.3 721.4,891.6 723.0,894.7 724.6,893.2 726.2,894.7 727.8,897.8 729.3,897.8 730.9,897.8 732.5,897.8 734.1,902.5 735.7,899.4 737.3,896.3 738.8,896.3 740.4,896.3 742.0,897.8 743.6,900.9 745.2,899.4 746.8,900.9 748.3,899.4 749.9,897.8 751.5,899.4 753.1,900.9 754.7,899.4 756.3,899.4 757.8,897.8 759.4,896.3 761.0,893.2 762.6,893.2 764.2,890.1 765.8,894.7 767.3,899.4 768.9,904.0 770.5,908.7 772.1,910.2 773.7,905.6 775.3,904.0 776.8,900.9 778.4,900.9 780.0,897.8 781.6,896.3 783.2,890.1 784.8,885.5 786.3,880.8 787.9,876.2 789.5,873.1 791.1,873.1 792.7,873.1 794.3,874.6 795.8,874.6 797.4,873.1 799.0,876.2 800.6,874.6 802.2,873.1 803.8,873.1 805.3,876.2 806.9,879.3 808.5,883.9 810.1,882.4 811.7,876.2 813.3,874.6 814.8,876.2 816.4,876.2 818.0,877.7 819.6,877.7 821.2,876.2 822.8,874.6 824.3,874.6 825.9,874.6 827.5,876.2 829.1,879.3 830.7,879.3 832.3,879.3 833.8,882.4 835.4,882.4 837.0,882.4 838.6,885.5 840.2,887.0 841.8,887.0 843.3,882.4 844.9,883.9 846.5,880.8 848.1,882.4 849.7,882.4 851.3,880.8 852.8,882.4 854.4,880.8 856.0,882.4 857.6,890.1 859.2,897.8 860.8,899.4 862.3,897.8 863.9,891.6 865.5,890.1 867.1,885.5 868.7,887.0 870.3,888.6 871.8,888.6 873.4,888.6 875.0,885.5 876.6,885.5 878.2,890.1 879.8,890.1 881.3,891.6 882.9,891.6 884.5,891.6 886.1,891.6 887.7,890.1 889.3,893.2 890.8,891.6 892.4,891.6 894.0,893.2 895.6,894.7 897.2,894.7 898.8,896.3 900.3,891.6 901.9,891.6 903.5,891.6 905.1,885.5 906.7,887.0 908.3,888.6 909.8,891.6 911.4,890.1 913.0,888.6 914.6,888.6 916.2,888.6 917.8,883.9 919.3,883.9 920.9,883.9 922.5,887.0 924.1,885.5 925.7,888.6 927.3,888.6 928.8,885.5 930.4,883.9 932.0,880.8 933.6,879.3 935.2,879.3 936.8,880.8 938.3,882.4 939.9,883.9 941.5,882.4 943.1,882.4 944.7,882.4 946.3,882.4 947.8,882.4 949.4,882.4 951.0,880.8 952.6,879.3 954.2,876.2 955.8,877.7 957.3,876.2 958.9,874.6 960.5,873.1 962.1,876.2 963.7,877.7 965.3,876.2 966.8,871.5 968.4,868.4 970.0,866.9 971.6,868.4 973.2,865.3 974.8,868.4 976.3,870.0 977.9,868.4 979.5,870.0 981.1,868.4 982.7,871.5 984.3,871.5 985.8,870.0 987.4,871.5 989.0,871.5 990.6,876.2 992.2,876.2 993.8,877.7 995.3,877.7 996.9,877.7 998.5,880.8 1000.1,882.4 1001.7,880.8 1003.3,877.7 1004.8,879.3 1006.4,877.7 1008.0,879.3 1009.6,882.4 1011.2,880.8 1012.8,880.8 1014.3,880.8 1015.9,880.8 1017.5,880.8 1019.1,880.8 1020.7,883.9 1022.3,879.3 1023.8,874.6 1025.4,874.6 1027.0,873.1 1028.6,874.6 1030.2,873.1 1031.8,870.0 1033.3,868.4 1034.9,866.9 1036.5,863.8 1038.1,870.0 1039.7,874.6 1041.3,874.6 1042.8,874.6 1044.4,873.1 1046.0,868.4 1047.6,870.0 1049.2,868.4 1050.8,871.5 1052.3,876.2 1053.9,874.6 1055.5,879.3 1057.1,876.2 1058.7,876.2 1060.3,876.2 1061.8,873.1 1063.4,874.6 1065.0,877.7 1066.6,879.3 1068.2,877.7 1069.8,882.4 1071.3,880.8 1072.9,879.3 1074.5,883.9 1076.1,888.6 1077.7,888.6 1079.3,888.6 1080.8,888.6 1082.4,888.6 1084.0,885.5 1085.6,885.5 1087.2,887.0 1088.8,888.6 1090.3,893.2 1091.9,894.7 1093.5,893.2 1095.1,893.2 1096.7,893.2 1098.3,888.6 1099.8,887.0 1101.4,885.5 1103.0,885.5 1104.6,885.5 1106.2,891.6 1107.8,894.7 1109.3,891.6 1110.9,893.2 1112.5,890.1 1114.1,891.6 1115.7,891.6 1117.3,893.2 1118.8,893.2 1120.4,890.1 1122.0,887.0 1123.6,887.0 1125.2,887.0 1126.7,887.0 1128.3,887.0 1129.9,887.0 1131.5,887.0 1133.1,887.0 1134.7,887.0 1136.2,887.0 1137.8,885.5 1139.4,888.6 1141.0,888.6 1142.6,885.5 1144.2,885.5 1145.7,887.0 1147.3,890.1 1148.9,890.1 1150.5,887.0 1152.1,887.0 1153.7,885.5 1155.2,883.9 1156.8,880.8 1158.4,879.3 1160.0,880.8 1161.6,880.8 1163.2,887.0 1164.7,887.0 1166.3,888.6 1167.9,888.6 1169.5,890.1 1171.1,893.2 1172.7,893.2 1174.2,891.6 1175.8,891.6 1177.4,891.6 1179.0,887.0 1180.6,887.0 1182.2,885.5 1183.7,885.5 1185.3,885.5 1186.9,885.5 1188.5,887.0 1190.1,887.0 1191.7,888.6 1193.2,891.6 1194.8,890.1 1196.4,893.2 1198.0,894.7 1199.6,894.7 1201.2,894.7 1202.7,896.3 1204.3,896.3 1205.9,897.8 1207.5,897.8 1209.1,896.3 1210.7,894.7 1212.2,894.7 1213.8,888.6 1215.4,882.4 1217.0,876.2 1218.6,876.2 1220.2,873.1 1221.7,873.1 1223.3,871.5 1224.9,871.5 1226.5,874.6 1228.1,879.3 1229.7,877.7 1231.2,876.2 1232.8,873.1 1234.4,873.1 1236.0,873.1 1237.6,874.6 1239.2,874.6 1240.7,874.6 1242.3,873.1 1243.9,876.2 1245.5,880.8 1247.1,879.3 1248.7,879.3 1250.2,874.6 1251.8,870.0 1253.4,873.1 1255.0,870.0 1256.6,870.0 1258.2,868.4 1259.7,863.8 1261.3,859.1 1262.9,859.1 1264.5,857.6 1266.1,852.9 1267.7,848.3 1269.2,848.3 1270.8,849.9 1272.4,849.9 1274.0,848.3 1275.6,848.3 1277.2,846.8 1278.7,842.1 1280.3,843.7 1281.9,840.6 1283.5,837.5 1285.1,834.4 1286.7,831.3 1288.2,829.7 1289.8,818.9 1291.4,820.4 1293.0,823.5 1294.6,823.5 1296.2,820.4 1297.7,823.5 1299.3,826.6 1300.9,809.6 1302.5,797.2 1304.1,791.0 1305.7,792.6 1307.2,795.7 1308.8,797.2 1310.4,798.8 1312.0,801.9 1313.6,808.1 1315.2,800.3 1316.7,794.1 1318.3,792.6 1319.9,789.5 1321.5,795.7 1323.1,800.3 1324.7,803.4 1326.2,808.1 1327.8,812.7 1329.4,811.2 1331.0,808.1 1332.6,812.7 1334.2,815.8 1335.7,823.5 1337.3,822.0 1338.9,817.3 1340.5,814.2 1342.1,812.7 1343.7,812.7 1345.2,811.2 1346.8,811.2 1348.4,806.5 1350.0,805.0 1351.6,806.5 1353.2,809.6 1354.7,809.6 1356.3,809.6 1357.9,811.2 1359.5,811.2 1361.1,814.2 1362.7,814.2 1364.2,818.9 1365.8,818.9 1367.4,814.2 1369.0,811.2 1370.6,806.5 1372.2,805.0 1373.7,801.9 1375.3,800.3 1376.9,801.9 1378.5,808.1 1380.1,817.3 1381.7,818.9 1383.2,823.5 1384.8,823.5 1386.4,828.2 1388.0,828.2 1389.6,828.2 1391.2,826.6 1392.7,826.6 1394.3,829.7 1395.9,831.3 1397.5,831.3 1399.1,832.8 1400.7,829.7 1402.2,828.2 1403.8,826.6 1405.4,834.4 1407.0,842.1 1408.6,842.1 1410.2,837.5 1411.7,834.4 1413.3,831.3 1414.9,832.8 1416.5,832.8 1418.1,831.3 1419.7,832.8 1421.2,835.9 1422.8,840.6 1424.4,842.1 1426.0,845.2 1427.6,842.1 1429.2,842.1 1430.7,839.0 1432.3,837.5 1433.9,835.9 1435.5,840.6 1437.1,840.6 1438.7,837.5 1440.2,834.4 1441.8,837.5 1443.4,839.0 1445.0,837.5 1446.6,837.5 1448.2,834.4 1449.7,834.4 1451.3,835.9 1452.9,837.5 1454.5,839.0 1456.1,832.8 1457.7,831.3 1459.2,826.6 1460.8,825.1 1462.4,823.5 1464.0,820.4 1465.6,820.4 1467.2,820.4 1468.7,817.3 1470.3,815.8 1471.9,815.8 1473.5,812.7 1475.1,812.7 1476.7,812.7 1478.2,812.7 1479.8,812.7 1481.4,815.8 1483.0,815.8 1484.6,815.8 1486.2,817.3 1487.7,818.9 1489.3,823.5 1490.9,825.1 1492.5,826.6 1494.1,826.6 1495.7,829.7 1497.2,829.7 1498.8,822.0 1500.4,818.9 1502.0,815.8 1503.6,811.2 1505.2,809.6 1506.7,809.6 1508.3,809.6 1509.9,811.2 1511.5,814.2 1513.1,817.3 1514.7,812.7 1516.2,809.6 1517.8,805.0 1519.4,803.4 1521.0,797.2 1522.6,791.0 1524.2,792.6 1525.7,789.5 1527.3,789.5 1528.9,786.4 1530.5,787.9 1532.1,791.0 1533.7,792.6 1535.2,795.7 1536.8,797.2 1538.4,798.8 1540.0,803.4 1541.6,800.3 1543.2,800.3 1544.7,798.8 1546.3,794.1 1547.9,789.5 1549.5,784.8 1551.1,786.4 1552.7,794.1 1554.2,800.3 1555.8,797.2 1557.4,797.2 1559.0,797.2 1560.6,797.2 1562.2,795.7 1563.7,795.7 1565.3,792.6 1566.9,791.0 1568.5,786.4 1570.1,775.5 1571.7,777.1 1573.2,777.1 1574.8,778.6 1576.4,780.2 1578.0,781.7 1579.6,781.7 1581.2,783.3 1582.7,783.3 1584.3,780.2 1585.9,778.6 1587.5,781.7 1589.1,780.2 1590.7,775.5 1592.2,777.1 1593.8,777.1 1595.4,778.6 1597.0,780.2 1598.6,784.8 1600.2,783.3 1601.7,778.6 1603.3,780.2 1604.9,778.6 1606.5,780.2 1608.1,778.6 1609.7,777.1 1611.2,777.1 1612.8,775.5 1614.4,774.0 1616.0,772.5 1617.6,777.1 1619.2,780.2 1620.7,780.2 1622.3,781.7 1623.9,781.7 1625.5,784.8 1627.1,786.4 1628.7,787.9 1630.2,787.9 1631.8,783.3 1633.4,783.3 1635.0,781.7 1636.6,781.7 1638.2,783.3 1639.7,783.3 1641.3,784.8 1642.9,786.4 1644.5,787.9 1646.1,791.0 1647.7,789.5 1649.2,791.0 1650.8,791.0 1652.4,789.5 1654.0,784.8 1655.6,784.8 1657.2,783.3 1658.7,781.7 1660.3,780.2 1661.9,778.6 1663.5,772.5 1665.1,774.0 1666.7,772.5 1668.2,770.9 1669.8,769.4 1671.4,769.4 1673.0,769.4 1674.6,770.9 1676.2,780.2 1677.7,784.8 1679.3,784.8 1680.9,783.3 1682.5,777.1 1684.1,775.5 1685.7,772.5 1687.2,767.8 1688.8,763.2 1690.4,761.6 1692.0,764.7 1693.6,764.7 1695.2,766.3 1696.7,766.3 1698.3,769.4 1699.9,772.5 1701.5,774.0 1703.1,775.5 1704.7,774.0 1706.2,767.8 1707.8,761.6 1709.4,760.1 1711.0,761.6 1712.6,761.6 1714.2,761.6 1715.7,758.5 1717.3,758.5 1718.9,758.5 1720.5,757.0 1722.1,758.5 1723.7,753.9 1725.2,758.5 1726.8,760.1 1728.4,761.6 1730.0,763.2 1731.6,766.3 1733.2,766.3 1734.7,766.3 1736.3,767.8 1737.9,766.3 1739.5,767.8 1741.1,766.3 1742.7,764.7 1744.2,763.2 1745.8,761.6 1747.4,763.2 1749.0,763.2 1750.6,764.7 1752.2,763.2 1753.7,766.3 1755.3,767.8 1756.9,764.7 1758.5,764.7 1760.1,764.7 1761.7,764.7 1763.2,766.3 1764.8,767.8 1766.4,766.3 1768.0,767.8 1769.6,766.3 1771.2,767.8 1772.7,766.3 1774.3,767.8 1775.9,767.8 1777.5,770.9 1779.1,770.9 1780.7,769.4 1782.2,766.3 1783.8,763.2 1785.4,761.6 1787.0,763.2 1788.6,764.7 1790.2,766.3 1791.7,764.7 1793.3,763.2 1794.9,760.1 1796.5,764.7 1798.1,764.7 1799.7,764.7 1801.2,764.7 1802.8,764.7 1804.4,764.7 1806.0,769.4 1807.6,769.4 1809.2,767.8 1810.7,769.4 1812.3,769.4 1813.9,772.5 1815.5,770.9 1817.1,772.5 1818.7,772.5 1820.2,772.5 1821.8,770.9 1823.4,772.5 1825.0,769.4 1826.6,767.8 1828.2,769.4 1829.7,767.8 1831.3,770.9 1832.9,770.9 1834.5,769.4 1836.1,770.9 1837.7,769.4 1839.2,769.4 1840.8,769.4 1842.4,769.4 1844.0,767.8 1845.6,767.8 1847.2,766.3 1848.7,769.4 1850.3,772.5 1851.9,774.0 1853.5,774.0 1855.1,775.5 1856.7,774.0 1858.2,774.0 1859.8,774.0 1861.4,772.5 1863.0,770.9 1864.6,772.5 1866.2,769.4 1867.7,770.9 1869.3,770.9 1870.9,774.0 1872.5,772.5 1874.1,772.5 1875.7,769.4 1877.2,767.8 1878.8,766.3 1880.4,766.3 1882.0,767.8 1883.6,766.3 1885.2,767.8 1886.7,769.4 1888.3,772.5 1889.9,770.9 1891.5,770.9 1893.1,774.0 1894.7,772.5 1896.2,772.5 1897.8,775.5 1899.4,775.5 1901.0,775.5 1902.6,775.5 1904.2,774.0 1905.7,774.0 1907.3,774.0 1908.9,774.0 1910.5,772.5 1912.1,774.0 1913.7,772.5 1915.2,774.0 1916.8,775.5 1918.4,770.9 1920.0,770.9 1921.6,770.9 1923.1,772.5 1924.7,774.0" fill="none" stroke="#ff0000" stroke-width="3.0" stroke-linejoin="miter" stroke-linecap="square"/>
<rect x="1931.0" y="119.2" width="93.30000000000004" height="32.499999999999986" fill="#d4d4d4"/>
<text transform="translate(0,140.90) scale(0.7800,1)" x="2502.05 2518.17 2528.46 2541.66 2554.87" y="0" font-family='"Liberation Sans", "IPAGothic", sans-serif' font-size="21.0" fill="#000000" font-weight="bold" stroke="#000" stroke-width="0.8">8,573</text>
<rect x="1931.0" y="637.6" width="93.30000000000004" height="34.60000000000002" fill="#d4d4d4"/>
<text transform="translate(0,659.20) scale(0.7800,1)" x="2502.05 2518.17 2528.46 2541.66 2554.87" y="0" font-family='"Liberation Sans", "IPAGothic", sans-serif' font-size="21.0" fill="#000000" font-weight="bold" stroke="#000" stroke-width="0.8">4,605</text>
<rect x="1931.0" y="758.0" width="93.30000000000004" height="34.0" fill="#d4d4d4"/>
<text transform="translate(0,781.70) scale(0.7800,1)" x="2502.05 2518.17 2528.46 2541.66 2554.87" y="0" font-family='"Liberation Sans", "IPAGothic", sans-serif' font-size="21.0" fill="#000000" font-weight="bold" stroke="#000" stroke-width="0.8">3,968</text>
</g>
</svg>
</body></html>
